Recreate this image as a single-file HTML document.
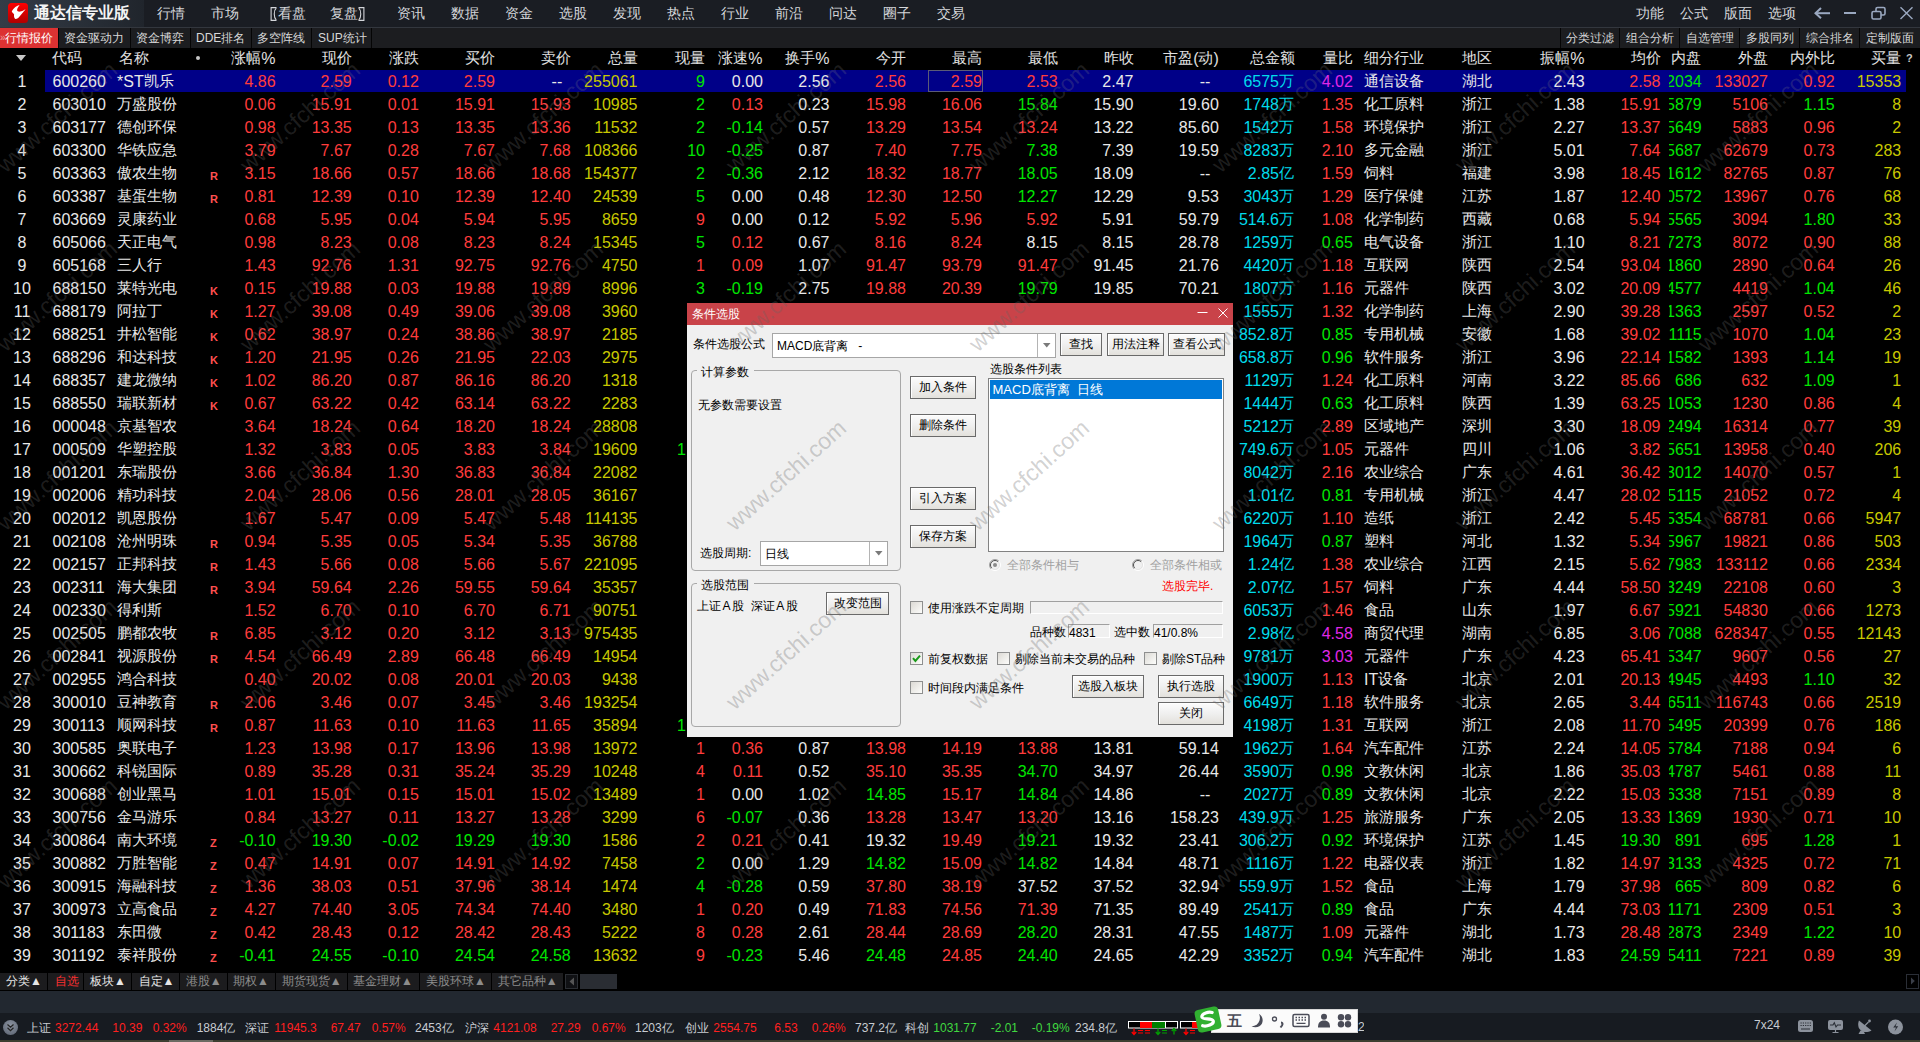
<!DOCTYPE html><html><head><meta charset="utf-8"><style>
*{margin:0;padding:0;box-sizing:border-box}
html,body{width:1920px;height:1042px;overflow:hidden;background:#000;font-family:"Liberation Sans",sans-serif;}
.a{position:absolute}
.c{position:absolute;white-space:nowrap;font-size:15px;line-height:22px;height:22px}
.c.r{text-align:right}
.n{font-size:16px;position:relative;top:1px}
.dt{white-space:nowrap}
.btn{position:absolute;border:1px solid #6a6a6a;background:linear-gradient(#fcfcfc,#f1f1f1 45%,#e3e1dc);box-shadow:inset 1px 1px 0 #fff;text-align:center;font-size:12px;color:#000;white-space:nowrap}
.chk{position:absolute;width:13px;height:13px;border:1px solid #8e8f8f;background:linear-gradient(135deg,#dcdad5,#fdfdfb)}
.wm{position:absolute;width:200px;height:30px;line-height:30px;text-align:center;font-size:23px;color:rgba(128,128,128,0.3);transform:rotate(-42deg);white-space:nowrap}
.st{font-size:12px;line-height:20px;white-space:nowrap}
.mk{position:absolute;font-size:11px;font-weight:bold;color:#ff5050;line-height:12px}
</style></head><body><div class="a" style="left:0;top:0;width:1920px;height:27px;background:#1a1d23"></div>
<div class="a" style="left:0;top:0;width:144px;height:27px;background:linear-gradient(90deg,#343c47,#20252c)"></div>
<div class="a" style="left:0;top:27px;width:1920px;height:1px;background:#33373e"></div>
<div class="a" style="left:0;top:28px;width:1920px;height:20px;background:#1c1d20"></div>
<div class="a" style="left:45px;top:70px;width:1861px;height:22px;background:#000088"></div>
<div class="a" style="left:928px;top:70px;width:55px;height:22px;border:1px solid #5a5a78"></div>
<div class="c" style="left:0;width:44px;text-align:center;top:70px;color:#e8e8e8"><span class="n">1</span></div>
<div class="c " style="left:52.5px;top:70px;color:#e8e8e8"><span class="n">600260</span></div>
<div class="c " style="left:117.0px;top:70px;color:#e8e8e8"><span class="n">*ST</span>凯乐</div>
<div class="c r " style="right:1644.4px;top:70px;color:#ff3c3c"><span class="n">4.86</span></div>
<div class="c r " style="right:1568.3px;top:70px;color:#ff3c3c"><span class="n">2.59</span></div>
<div class="c r " style="right:1501.2px;top:70px;color:#ff3c3c"><span class="n">0.12</span></div>
<div class="c r " style="right:1425.0px;top:70px;color:#ff3c3c"><span class="n">2.59</span></div>
<div class="c r " style="right:1357.8px;top:70px;color:#e8e8e8"><span class="n">--</span></div>
<div class="c r " style="right:1282.5px;top:70px;color:#c8c800"><span class="n">255061</span></div>
<div class="c r " style="right:1215.0px;top:70px;color:#00e600"><span class="n">9</span></div>
<div class="c r " style="right:1157.0px;top:70px;color:#e8e8e8"><span class="n">0.00</span></div>
<div class="c r " style="right:1090.5px;top:70px;color:#e8e8e8"><span class="n">2.56</span></div>
<div class="c r " style="right:1014.0px;top:70px;color:#ff3c3c"><span class="n">2.56</span></div>
<div class="c r " style="right:938.0px;top:70px;color:#ff3c3c"><span class="n">2.59</span></div>
<div class="c r " style="right:862.3px;top:70px;color:#ff3c3c"><span class="n">2.53</span></div>
<div class="c r " style="right:786.5px;top:70px;color:#e8e8e8"><span class="n">2.47</span></div>
<div class="c r " style="right:709.7px;top:70px;color:#e8e8e8"><span class="n">--</span></div>
<div class="c r " style="right:626.0px;top:70px;color:#00dcec"><span class="n">6575</span>万</div>
<div class="c r " style="right:567.2px;top:70px;color:#e028e8"><span class="n">4.02</span></div>
<div class="c " style="left:1364.0px;top:70px;color:#e8e8e8">通信设备</div>
<div class="c " style="left:1462.0px;top:70px;color:#e8e8e8">湖北</div>
<div class="c r " style="right:335.4px;top:70px;color:#e8e8e8"><span class="n">2.43</span></div>
<div class="c r " style="right:259.5px;top:70px;color:#ff3c3c"><span class="n">2.58</span></div>
<div class="a" style="left:1669px;top:70px;width:32.7px;height:22px;overflow:hidden"><div class="c r" style="right:0;top:0;color:#00e600"><span class="n">2034</span></div></div>
<div class="c r " style="right:152.0px;top:70px;color:#ff3c3c"><span class="n">133027</span></div>
<div class="c r " style="right:85.3px;top:70px;color:#ff3c3c"><span class="n">0.92</span></div>
<div class="c r " style="right:18.8px;top:70px;color:#c8c800"><span class="n">15353</span></div>
<div class="c" style="left:0;width:44px;text-align:center;top:93px;color:#e8e8e8"><span class="n">2</span></div>
<div class="c " style="left:52.5px;top:93px;color:#e8e8e8"><span class="n">603010</span></div>
<div class="c " style="left:117.0px;top:93px;color:#e8e8e8">万盛股份</div>
<div class="c r " style="right:1644.4px;top:93px;color:#ff3c3c"><span class="n">0.06</span></div>
<div class="c r " style="right:1568.3px;top:93px;color:#ff3c3c"><span class="n">15.91</span></div>
<div class="c r " style="right:1501.2px;top:93px;color:#ff3c3c"><span class="n">0.01</span></div>
<div class="c r " style="right:1425.0px;top:93px;color:#ff3c3c"><span class="n">15.91</span></div>
<div class="c r " style="right:1349.3px;top:93px;color:#ff3c3c"><span class="n">15.93</span></div>
<div class="c r " style="right:1282.5px;top:93px;color:#c8c800"><span class="n">10985</span></div>
<div class="c r " style="right:1215.0px;top:93px;color:#00e600"><span class="n">2</span></div>
<div class="c r " style="right:1157.0px;top:93px;color:#ff3c3c"><span class="n">0.13</span></div>
<div class="c r " style="right:1090.5px;top:93px;color:#e8e8e8"><span class="n">0.23</span></div>
<div class="c r " style="right:1014.0px;top:93px;color:#ff3c3c"><span class="n">15.98</span></div>
<div class="c r " style="right:938.0px;top:93px;color:#ff3c3c"><span class="n">16.06</span></div>
<div class="c r " style="right:862.3px;top:93px;color:#00e600"><span class="n">15.84</span></div>
<div class="c r " style="right:786.5px;top:93px;color:#e8e8e8"><span class="n">15.90</span></div>
<div class="c r " style="right:701.2px;top:93px;color:#e8e8e8"><span class="n">19.60</span></div>
<div class="c r " style="right:626.0px;top:93px;color:#00dcec"><span class="n">1748</span>万</div>
<div class="c r " style="right:567.2px;top:93px;color:#ff3c3c"><span class="n">1.35</span></div>
<div class="c " style="left:1364.0px;top:93px;color:#e8e8e8">化工原料</div>
<div class="c " style="left:1462.0px;top:93px;color:#e8e8e8">浙江</div>
<div class="c r " style="right:335.4px;top:93px;color:#e8e8e8"><span class="n">1.38</span></div>
<div class="c r " style="right:259.5px;top:93px;color:#ff3c3c"><span class="n">15.91</span></div>
<div class="a" style="left:1669px;top:93px;width:32.7px;height:22px;overflow:hidden"><div class="c r" style="right:0;top:0;color:#00e600"><span class="n">5879</span></div></div>
<div class="c r " style="right:152.0px;top:93px;color:#ff3c3c"><span class="n">5106</span></div>
<div class="c r " style="right:85.3px;top:93px;color:#00e600"><span class="n">1.15</span></div>
<div class="c r " style="right:18.8px;top:93px;color:#c8c800"><span class="n">8</span></div>
<div class="c" style="left:0;width:44px;text-align:center;top:116px;color:#e8e8e8"><span class="n">3</span></div>
<div class="c " style="left:52.5px;top:116px;color:#e8e8e8"><span class="n">603177</span></div>
<div class="c " style="left:117.0px;top:116px;color:#e8e8e8">德创环保</div>
<div class="c r " style="right:1644.4px;top:116px;color:#ff3c3c"><span class="n">0.98</span></div>
<div class="c r " style="right:1568.3px;top:116px;color:#ff3c3c"><span class="n">13.35</span></div>
<div class="c r " style="right:1501.2px;top:116px;color:#ff3c3c"><span class="n">0.13</span></div>
<div class="c r " style="right:1425.0px;top:116px;color:#ff3c3c"><span class="n">13.35</span></div>
<div class="c r " style="right:1349.3px;top:116px;color:#ff3c3c"><span class="n">13.36</span></div>
<div class="c r " style="right:1282.5px;top:116px;color:#c8c800"><span class="n">11532</span></div>
<div class="c r " style="right:1215.0px;top:116px;color:#00e600"><span class="n">2</span></div>
<div class="c r " style="right:1157.0px;top:116px;color:#00e600"><span class="n">-0.14</span></div>
<div class="c r " style="right:1090.5px;top:116px;color:#e8e8e8"><span class="n">0.57</span></div>
<div class="c r " style="right:1014.0px;top:116px;color:#ff3c3c"><span class="n">13.29</span></div>
<div class="c r " style="right:938.0px;top:116px;color:#ff3c3c"><span class="n">13.54</span></div>
<div class="c r " style="right:862.3px;top:116px;color:#ff3c3c"><span class="n">13.24</span></div>
<div class="c r " style="right:786.5px;top:116px;color:#e8e8e8"><span class="n">13.22</span></div>
<div class="c r " style="right:701.2px;top:116px;color:#e8e8e8"><span class="n">85.60</span></div>
<div class="c r " style="right:626.0px;top:116px;color:#00dcec"><span class="n">1542</span>万</div>
<div class="c r " style="right:567.2px;top:116px;color:#ff3c3c"><span class="n">1.58</span></div>
<div class="c " style="left:1364.0px;top:116px;color:#e8e8e8">环境保护</div>
<div class="c " style="left:1462.0px;top:116px;color:#e8e8e8">浙江</div>
<div class="c r " style="right:335.4px;top:116px;color:#e8e8e8"><span class="n">2.27</span></div>
<div class="c r " style="right:259.5px;top:116px;color:#ff3c3c"><span class="n">13.37</span></div>
<div class="a" style="left:1669px;top:116px;width:32.7px;height:22px;overflow:hidden"><div class="c r" style="right:0;top:0;color:#00e600"><span class="n">5649</span></div></div>
<div class="c r " style="right:152.0px;top:116px;color:#ff3c3c"><span class="n">5883</span></div>
<div class="c r " style="right:85.3px;top:116px;color:#ff3c3c"><span class="n">0.96</span></div>
<div class="c r " style="right:18.8px;top:116px;color:#c8c800"><span class="n">2</span></div>
<div class="c" style="left:0;width:44px;text-align:center;top:139px;color:#e8e8e8"><span class="n">4</span></div>
<div class="c " style="left:52.5px;top:139px;color:#e8e8e8"><span class="n">603300</span></div>
<div class="c " style="left:117.0px;top:139px;color:#e8e8e8">华铁应急</div>
<div class="c r " style="right:1644.4px;top:139px;color:#ff3c3c"><span class="n">3.79</span></div>
<div class="c r " style="right:1568.3px;top:139px;color:#ff3c3c"><span class="n">7.67</span></div>
<div class="c r " style="right:1501.2px;top:139px;color:#ff3c3c"><span class="n">0.28</span></div>
<div class="c r " style="right:1425.0px;top:139px;color:#ff3c3c"><span class="n">7.67</span></div>
<div class="c r " style="right:1349.3px;top:139px;color:#ff3c3c"><span class="n">7.68</span></div>
<div class="c r " style="right:1282.5px;top:139px;color:#c8c800"><span class="n">108366</span></div>
<div class="c r " style="right:1215.0px;top:139px;color:#00e600"><span class="n">10</span></div>
<div class="c r " style="right:1157.0px;top:139px;color:#00e600"><span class="n">-0.25</span></div>
<div class="c r " style="right:1090.5px;top:139px;color:#e8e8e8"><span class="n">0.87</span></div>
<div class="c r " style="right:1014.0px;top:139px;color:#ff3c3c"><span class="n">7.40</span></div>
<div class="c r " style="right:938.0px;top:139px;color:#ff3c3c"><span class="n">7.75</span></div>
<div class="c r " style="right:862.3px;top:139px;color:#00e600"><span class="n">7.38</span></div>
<div class="c r " style="right:786.5px;top:139px;color:#e8e8e8"><span class="n">7.39</span></div>
<div class="c r " style="right:701.2px;top:139px;color:#e8e8e8"><span class="n">19.59</span></div>
<div class="c r " style="right:626.0px;top:139px;color:#00dcec"><span class="n">8283</span>万</div>
<div class="c r " style="right:567.2px;top:139px;color:#ff3c3c"><span class="n">2.10</span></div>
<div class="c " style="left:1364.0px;top:139px;color:#e8e8e8">多元金融</div>
<div class="c " style="left:1462.0px;top:139px;color:#e8e8e8">浙江</div>
<div class="c r " style="right:335.4px;top:139px;color:#e8e8e8"><span class="n">5.01</span></div>
<div class="c r " style="right:259.5px;top:139px;color:#ff3c3c"><span class="n">7.64</span></div>
<div class="a" style="left:1669px;top:139px;width:32.7px;height:22px;overflow:hidden"><div class="c r" style="right:0;top:0;color:#00e600"><span class="n">5687</span></div></div>
<div class="c r " style="right:152.0px;top:139px;color:#ff3c3c"><span class="n">62679</span></div>
<div class="c r " style="right:85.3px;top:139px;color:#ff3c3c"><span class="n">0.73</span></div>
<div class="c r " style="right:18.8px;top:139px;color:#c8c800"><span class="n">283</span></div>
<div class="c" style="left:0;width:44px;text-align:center;top:162px;color:#e8e8e8"><span class="n">5</span></div>
<div class="c " style="left:52.5px;top:162px;color:#e8e8e8"><span class="n">603363</span></div>
<div class="c " style="left:117.0px;top:162px;color:#e8e8e8">傲农生物</div>
<div class="mk" style="left:210px;top:170px">R</div>
<div class="c r " style="right:1644.4px;top:162px;color:#ff3c3c"><span class="n">3.15</span></div>
<div class="c r " style="right:1568.3px;top:162px;color:#ff3c3c"><span class="n">18.66</span></div>
<div class="c r " style="right:1501.2px;top:162px;color:#ff3c3c"><span class="n">0.57</span></div>
<div class="c r " style="right:1425.0px;top:162px;color:#ff3c3c"><span class="n">18.66</span></div>
<div class="c r " style="right:1349.3px;top:162px;color:#ff3c3c"><span class="n">18.68</span></div>
<div class="c r " style="right:1282.5px;top:162px;color:#c8c800"><span class="n">154377</span></div>
<div class="c r " style="right:1215.0px;top:162px;color:#00e600"><span class="n">2</span></div>
<div class="c r " style="right:1157.0px;top:162px;color:#00e600"><span class="n">-0.36</span></div>
<div class="c r " style="right:1090.5px;top:162px;color:#e8e8e8"><span class="n">2.12</span></div>
<div class="c r " style="right:1014.0px;top:162px;color:#ff3c3c"><span class="n">18.32</span></div>
<div class="c r " style="right:938.0px;top:162px;color:#ff3c3c"><span class="n">18.77</span></div>
<div class="c r " style="right:862.3px;top:162px;color:#00e600"><span class="n">18.05</span></div>
<div class="c r " style="right:786.5px;top:162px;color:#e8e8e8"><span class="n">18.09</span></div>
<div class="c r " style="right:709.7px;top:162px;color:#e8e8e8"><span class="n">--</span></div>
<div class="c r " style="right:626.0px;top:162px;color:#00dcec"><span class="n">2.85</span>亿</div>
<div class="c r " style="right:567.2px;top:162px;color:#ff3c3c"><span class="n">1.59</span></div>
<div class="c " style="left:1364.0px;top:162px;color:#e8e8e8">饲料</div>
<div class="c " style="left:1462.0px;top:162px;color:#e8e8e8">福建</div>
<div class="c r " style="right:335.4px;top:162px;color:#e8e8e8"><span class="n">3.98</span></div>
<div class="c r " style="right:259.5px;top:162px;color:#ff3c3c"><span class="n">18.45</span></div>
<div class="a" style="left:1669px;top:162px;width:32.7px;height:22px;overflow:hidden"><div class="c r" style="right:0;top:0;color:#00e600"><span class="n">1612</span></div></div>
<div class="c r " style="right:152.0px;top:162px;color:#ff3c3c"><span class="n">82765</span></div>
<div class="c r " style="right:85.3px;top:162px;color:#ff3c3c"><span class="n">0.87</span></div>
<div class="c r " style="right:18.8px;top:162px;color:#c8c800"><span class="n">76</span></div>
<div class="c" style="left:0;width:44px;text-align:center;top:185px;color:#e8e8e8"><span class="n">6</span></div>
<div class="c " style="left:52.5px;top:185px;color:#e8e8e8"><span class="n">603387</span></div>
<div class="c " style="left:117.0px;top:185px;color:#e8e8e8">基蛋生物</div>
<div class="mk" style="left:210px;top:193px">R</div>
<div class="c r " style="right:1644.4px;top:185px;color:#ff3c3c"><span class="n">0.81</span></div>
<div class="c r " style="right:1568.3px;top:185px;color:#ff3c3c"><span class="n">12.39</span></div>
<div class="c r " style="right:1501.2px;top:185px;color:#ff3c3c"><span class="n">0.10</span></div>
<div class="c r " style="right:1425.0px;top:185px;color:#ff3c3c"><span class="n">12.39</span></div>
<div class="c r " style="right:1349.3px;top:185px;color:#ff3c3c"><span class="n">12.40</span></div>
<div class="c r " style="right:1282.5px;top:185px;color:#c8c800"><span class="n">24539</span></div>
<div class="c r " style="right:1215.0px;top:185px;color:#00e600"><span class="n">5</span></div>
<div class="c r " style="right:1157.0px;top:185px;color:#e8e8e8"><span class="n">0.00</span></div>
<div class="c r " style="right:1090.5px;top:185px;color:#e8e8e8"><span class="n">0.48</span></div>
<div class="c r " style="right:1014.0px;top:185px;color:#ff3c3c"><span class="n">12.30</span></div>
<div class="c r " style="right:938.0px;top:185px;color:#ff3c3c"><span class="n">12.50</span></div>
<div class="c r " style="right:862.3px;top:185px;color:#00e600"><span class="n">12.27</span></div>
<div class="c r " style="right:786.5px;top:185px;color:#e8e8e8"><span class="n">12.29</span></div>
<div class="c r " style="right:701.2px;top:185px;color:#e8e8e8"><span class="n">9.53</span></div>
<div class="c r " style="right:626.0px;top:185px;color:#00dcec"><span class="n">3043</span>万</div>
<div class="c r " style="right:567.2px;top:185px;color:#ff3c3c"><span class="n">1.29</span></div>
<div class="c " style="left:1364.0px;top:185px;color:#e8e8e8">医疗保健</div>
<div class="c " style="left:1462.0px;top:185px;color:#e8e8e8">江苏</div>
<div class="c r " style="right:335.4px;top:185px;color:#e8e8e8"><span class="n">1.87</span></div>
<div class="c r " style="right:259.5px;top:185px;color:#ff3c3c"><span class="n">12.40</span></div>
<div class="a" style="left:1669px;top:185px;width:32.7px;height:22px;overflow:hidden"><div class="c r" style="right:0;top:0;color:#00e600"><span class="n">0572</span></div></div>
<div class="c r " style="right:152.0px;top:185px;color:#ff3c3c"><span class="n">13967</span></div>
<div class="c r " style="right:85.3px;top:185px;color:#ff3c3c"><span class="n">0.76</span></div>
<div class="c r " style="right:18.8px;top:185px;color:#c8c800"><span class="n">68</span></div>
<div class="c" style="left:0;width:44px;text-align:center;top:208px;color:#e8e8e8"><span class="n">7</span></div>
<div class="c " style="left:52.5px;top:208px;color:#e8e8e8"><span class="n">603669</span></div>
<div class="c " style="left:117.0px;top:208px;color:#e8e8e8">灵康药业</div>
<div class="c r " style="right:1644.4px;top:208px;color:#ff3c3c"><span class="n">0.68</span></div>
<div class="c r " style="right:1568.3px;top:208px;color:#ff3c3c"><span class="n">5.95</span></div>
<div class="c r " style="right:1501.2px;top:208px;color:#ff3c3c"><span class="n">0.04</span></div>
<div class="c r " style="right:1425.0px;top:208px;color:#ff3c3c"><span class="n">5.94</span></div>
<div class="c r " style="right:1349.3px;top:208px;color:#ff3c3c"><span class="n">5.95</span></div>
<div class="c r " style="right:1282.5px;top:208px;color:#c8c800"><span class="n">8659</span></div>
<div class="c r " style="right:1215.0px;top:208px;color:#ff3c3c"><span class="n">9</span></div>
<div class="c r " style="right:1157.0px;top:208px;color:#e8e8e8"><span class="n">0.00</span></div>
<div class="c r " style="right:1090.5px;top:208px;color:#e8e8e8"><span class="n">0.12</span></div>
<div class="c r " style="right:1014.0px;top:208px;color:#ff3c3c"><span class="n">5.92</span></div>
<div class="c r " style="right:938.0px;top:208px;color:#ff3c3c"><span class="n">5.96</span></div>
<div class="c r " style="right:862.3px;top:208px;color:#ff3c3c"><span class="n">5.92</span></div>
<div class="c r " style="right:786.5px;top:208px;color:#e8e8e8"><span class="n">5.91</span></div>
<div class="c r " style="right:701.2px;top:208px;color:#e8e8e8"><span class="n">59.79</span></div>
<div class="c r " style="right:626.0px;top:208px;color:#00dcec"><span class="n">514.6</span>万</div>
<div class="c r " style="right:567.2px;top:208px;color:#ff3c3c"><span class="n">1.08</span></div>
<div class="c " style="left:1364.0px;top:208px;color:#e8e8e8">化学制药</div>
<div class="c " style="left:1462.0px;top:208px;color:#e8e8e8">西藏</div>
<div class="c r " style="right:335.4px;top:208px;color:#e8e8e8"><span class="n">0.68</span></div>
<div class="c r " style="right:259.5px;top:208px;color:#ff3c3c"><span class="n">5.94</span></div>
<div class="a" style="left:1669px;top:208px;width:32.7px;height:22px;overflow:hidden"><div class="c r" style="right:0;top:0;color:#00e600"><span class="n">5565</span></div></div>
<div class="c r " style="right:152.0px;top:208px;color:#ff3c3c"><span class="n">3094</span></div>
<div class="c r " style="right:85.3px;top:208px;color:#00e600"><span class="n">1.80</span></div>
<div class="c r " style="right:18.8px;top:208px;color:#c8c800"><span class="n">33</span></div>
<div class="c" style="left:0;width:44px;text-align:center;top:231px;color:#e8e8e8"><span class="n">8</span></div>
<div class="c " style="left:52.5px;top:231px;color:#e8e8e8"><span class="n">605066</span></div>
<div class="c " style="left:117.0px;top:231px;color:#e8e8e8">天正电气</div>
<div class="c r " style="right:1644.4px;top:231px;color:#ff3c3c"><span class="n">0.98</span></div>
<div class="c r " style="right:1568.3px;top:231px;color:#ff3c3c"><span class="n">8.23</span></div>
<div class="c r " style="right:1501.2px;top:231px;color:#ff3c3c"><span class="n">0.08</span></div>
<div class="c r " style="right:1425.0px;top:231px;color:#ff3c3c"><span class="n">8.23</span></div>
<div class="c r " style="right:1349.3px;top:231px;color:#ff3c3c"><span class="n">8.24</span></div>
<div class="c r " style="right:1282.5px;top:231px;color:#c8c800"><span class="n">15345</span></div>
<div class="c r " style="right:1215.0px;top:231px;color:#00e600"><span class="n">5</span></div>
<div class="c r " style="right:1157.0px;top:231px;color:#ff3c3c"><span class="n">0.12</span></div>
<div class="c r " style="right:1090.5px;top:231px;color:#e8e8e8"><span class="n">0.67</span></div>
<div class="c r " style="right:1014.0px;top:231px;color:#ff3c3c"><span class="n">8.16</span></div>
<div class="c r " style="right:938.0px;top:231px;color:#ff3c3c"><span class="n">8.24</span></div>
<div class="c r " style="right:862.3px;top:231px;color:#e8e8e8"><span class="n">8.15</span></div>
<div class="c r " style="right:786.5px;top:231px;color:#e8e8e8"><span class="n">8.15</span></div>
<div class="c r " style="right:701.2px;top:231px;color:#e8e8e8"><span class="n">28.78</span></div>
<div class="c r " style="right:626.0px;top:231px;color:#00dcec"><span class="n">1259</span>万</div>
<div class="c r " style="right:567.2px;top:231px;color:#00e600"><span class="n">0.65</span></div>
<div class="c " style="left:1364.0px;top:231px;color:#e8e8e8">电气设备</div>
<div class="c " style="left:1462.0px;top:231px;color:#e8e8e8">浙江</div>
<div class="c r " style="right:335.4px;top:231px;color:#e8e8e8"><span class="n">1.10</span></div>
<div class="c r " style="right:259.5px;top:231px;color:#ff3c3c"><span class="n">8.21</span></div>
<div class="a" style="left:1669px;top:231px;width:32.7px;height:22px;overflow:hidden"><div class="c r" style="right:0;top:0;color:#00e600"><span class="n">7273</span></div></div>
<div class="c r " style="right:152.0px;top:231px;color:#ff3c3c"><span class="n">8072</span></div>
<div class="c r " style="right:85.3px;top:231px;color:#ff3c3c"><span class="n">0.90</span></div>
<div class="c r " style="right:18.8px;top:231px;color:#c8c800"><span class="n">88</span></div>
<div class="c" style="left:0;width:44px;text-align:center;top:254px;color:#e8e8e8"><span class="n">9</span></div>
<div class="c " style="left:52.5px;top:254px;color:#e8e8e8"><span class="n">605168</span></div>
<div class="c " style="left:117.0px;top:254px;color:#e8e8e8">三人行</div>
<div class="c r " style="right:1644.4px;top:254px;color:#ff3c3c"><span class="n">1.43</span></div>
<div class="c r " style="right:1568.3px;top:254px;color:#ff3c3c"><span class="n">92.76</span></div>
<div class="c r " style="right:1501.2px;top:254px;color:#ff3c3c"><span class="n">1.31</span></div>
<div class="c r " style="right:1425.0px;top:254px;color:#ff3c3c"><span class="n">92.75</span></div>
<div class="c r " style="right:1349.3px;top:254px;color:#ff3c3c"><span class="n">92.76</span></div>
<div class="c r " style="right:1282.5px;top:254px;color:#c8c800"><span class="n">4750</span></div>
<div class="c r " style="right:1215.0px;top:254px;color:#ff3c3c"><span class="n">1</span></div>
<div class="c r " style="right:1157.0px;top:254px;color:#ff3c3c"><span class="n">0.09</span></div>
<div class="c r " style="right:1090.5px;top:254px;color:#e8e8e8"><span class="n">1.07</span></div>
<div class="c r " style="right:1014.0px;top:254px;color:#ff3c3c"><span class="n">91.47</span></div>
<div class="c r " style="right:938.0px;top:254px;color:#ff3c3c"><span class="n">93.79</span></div>
<div class="c r " style="right:862.3px;top:254px;color:#ff3c3c"><span class="n">91.47</span></div>
<div class="c r " style="right:786.5px;top:254px;color:#e8e8e8"><span class="n">91.45</span></div>
<div class="c r " style="right:701.2px;top:254px;color:#e8e8e8"><span class="n">21.76</span></div>
<div class="c r " style="right:626.0px;top:254px;color:#00dcec"><span class="n">4420</span>万</div>
<div class="c r " style="right:567.2px;top:254px;color:#ff3c3c"><span class="n">1.18</span></div>
<div class="c " style="left:1364.0px;top:254px;color:#e8e8e8">互联网</div>
<div class="c " style="left:1462.0px;top:254px;color:#e8e8e8">陕西</div>
<div class="c r " style="right:335.4px;top:254px;color:#e8e8e8"><span class="n">2.54</span></div>
<div class="c r " style="right:259.5px;top:254px;color:#ff3c3c"><span class="n">93.04</span></div>
<div class="a" style="left:1669px;top:254px;width:32.7px;height:22px;overflow:hidden"><div class="c r" style="right:0;top:0;color:#00e600"><span class="n">1860</span></div></div>
<div class="c r " style="right:152.0px;top:254px;color:#ff3c3c"><span class="n">2890</span></div>
<div class="c r " style="right:85.3px;top:254px;color:#ff3c3c"><span class="n">0.64</span></div>
<div class="c r " style="right:18.8px;top:254px;color:#c8c800"><span class="n">26</span></div>
<div class="c" style="left:0;width:44px;text-align:center;top:277px;color:#e8e8e8"><span class="n">10</span></div>
<div class="c " style="left:52.5px;top:277px;color:#e8e8e8"><span class="n">688150</span></div>
<div class="c " style="left:117.0px;top:277px;color:#e8e8e8">莱特光电</div>
<div class="mk" style="left:210px;top:285px">K</div>
<div class="c r " style="right:1644.4px;top:277px;color:#ff3c3c"><span class="n">0.15</span></div>
<div class="c r " style="right:1568.3px;top:277px;color:#ff3c3c"><span class="n">19.88</span></div>
<div class="c r " style="right:1501.2px;top:277px;color:#ff3c3c"><span class="n">0.03</span></div>
<div class="c r " style="right:1425.0px;top:277px;color:#ff3c3c"><span class="n">19.88</span></div>
<div class="c r " style="right:1349.3px;top:277px;color:#ff3c3c"><span class="n">19.89</span></div>
<div class="c r " style="right:1282.5px;top:277px;color:#c8c800"><span class="n">8996</span></div>
<div class="c r " style="right:1215.0px;top:277px;color:#00e600"><span class="n">3</span></div>
<div class="c r " style="right:1157.0px;top:277px;color:#00e600"><span class="n">-0.19</span></div>
<div class="c r " style="right:1090.5px;top:277px;color:#e8e8e8"><span class="n">2.75</span></div>
<div class="c r " style="right:1014.0px;top:277px;color:#ff3c3c"><span class="n">19.88</span></div>
<div class="c r " style="right:938.0px;top:277px;color:#ff3c3c"><span class="n">20.39</span></div>
<div class="c r " style="right:862.3px;top:277px;color:#00e600"><span class="n">19.79</span></div>
<div class="c r " style="right:786.5px;top:277px;color:#e8e8e8"><span class="n">19.85</span></div>
<div class="c r " style="right:701.2px;top:277px;color:#e8e8e8"><span class="n">70.21</span></div>
<div class="c r " style="right:626.0px;top:277px;color:#00dcec"><span class="n">1807</span>万</div>
<div class="c r " style="right:567.2px;top:277px;color:#ff3c3c"><span class="n">1.16</span></div>
<div class="c " style="left:1364.0px;top:277px;color:#e8e8e8">元器件</div>
<div class="c " style="left:1462.0px;top:277px;color:#e8e8e8">陕西</div>
<div class="c r " style="right:335.4px;top:277px;color:#e8e8e8"><span class="n">3.02</span></div>
<div class="c r " style="right:259.5px;top:277px;color:#ff3c3c"><span class="n">20.09</span></div>
<div class="a" style="left:1669px;top:277px;width:32.7px;height:22px;overflow:hidden"><div class="c r" style="right:0;top:0;color:#00e600"><span class="n">4577</span></div></div>
<div class="c r " style="right:152.0px;top:277px;color:#ff3c3c"><span class="n">4419</span></div>
<div class="c r " style="right:85.3px;top:277px;color:#00e600"><span class="n">1.04</span></div>
<div class="c r " style="right:18.8px;top:277px;color:#c8c800"><span class="n">46</span></div>
<div class="c" style="left:0;width:44px;text-align:center;top:300px;color:#e8e8e8"><span class="n">11</span></div>
<div class="c " style="left:52.5px;top:300px;color:#e8e8e8"><span class="n">688179</span></div>
<div class="c " style="left:117.0px;top:300px;color:#e8e8e8">阿拉丁</div>
<div class="mk" style="left:210px;top:308px">K</div>
<div class="c r " style="right:1644.4px;top:300px;color:#ff3c3c"><span class="n">1.27</span></div>
<div class="c r " style="right:1568.3px;top:300px;color:#ff3c3c"><span class="n">39.08</span></div>
<div class="c r " style="right:1501.2px;top:300px;color:#ff3c3c"><span class="n">0.49</span></div>
<div class="c r " style="right:1425.0px;top:300px;color:#ff3c3c"><span class="n">39.06</span></div>
<div class="c r " style="right:1349.3px;top:300px;color:#ff3c3c"><span class="n">39.08</span></div>
<div class="c r " style="right:1282.5px;top:300px;color:#c8c800"><span class="n">3960</span></div>
<div class="c r " style="right:626.0px;top:300px;color:#00dcec"><span class="n">1555</span>万</div>
<div class="c r " style="right:567.2px;top:300px;color:#ff3c3c"><span class="n">1.32</span></div>
<div class="c " style="left:1364.0px;top:300px;color:#e8e8e8">化学制药</div>
<div class="c " style="left:1462.0px;top:300px;color:#e8e8e8">上海</div>
<div class="c r " style="right:335.4px;top:300px;color:#e8e8e8"><span class="n">2.90</span></div>
<div class="c r " style="right:259.5px;top:300px;color:#ff3c3c"><span class="n">39.28</span></div>
<div class="a" style="left:1669px;top:300px;width:32.7px;height:22px;overflow:hidden"><div class="c r" style="right:0;top:0;color:#00e600"><span class="n">1363</span></div></div>
<div class="c r " style="right:152.0px;top:300px;color:#ff3c3c"><span class="n">2597</span></div>
<div class="c r " style="right:85.3px;top:300px;color:#ff3c3c"><span class="n">0.52</span></div>
<div class="c r " style="right:18.8px;top:300px;color:#c8c800"><span class="n">2</span></div>
<div class="c" style="left:0;width:44px;text-align:center;top:323px;color:#e8e8e8"><span class="n">12</span></div>
<div class="c " style="left:52.5px;top:323px;color:#e8e8e8"><span class="n">688251</span></div>
<div class="c " style="left:117.0px;top:323px;color:#e8e8e8">井松智能</div>
<div class="mk" style="left:210px;top:331px">K</div>
<div class="c r " style="right:1644.4px;top:323px;color:#ff3c3c"><span class="n">0.62</span></div>
<div class="c r " style="right:1568.3px;top:323px;color:#ff3c3c"><span class="n">38.97</span></div>
<div class="c r " style="right:1501.2px;top:323px;color:#ff3c3c"><span class="n">0.24</span></div>
<div class="c r " style="right:1425.0px;top:323px;color:#ff3c3c"><span class="n">38.86</span></div>
<div class="c r " style="right:1349.3px;top:323px;color:#ff3c3c"><span class="n">38.97</span></div>
<div class="c r " style="right:1282.5px;top:323px;color:#c8c800"><span class="n">2185</span></div>
<div class="c r " style="right:626.0px;top:323px;color:#00dcec"><span class="n">852.8</span>万</div>
<div class="c r " style="right:567.2px;top:323px;color:#00e600"><span class="n">0.85</span></div>
<div class="c " style="left:1364.0px;top:323px;color:#e8e8e8">专用机械</div>
<div class="c " style="left:1462.0px;top:323px;color:#e8e8e8">安徽</div>
<div class="c r " style="right:335.4px;top:323px;color:#e8e8e8"><span class="n">1.68</span></div>
<div class="c r " style="right:259.5px;top:323px;color:#ff3c3c"><span class="n">39.02</span></div>
<div class="a" style="left:1669px;top:323px;width:32.7px;height:22px;overflow:hidden"><div class="c r" style="right:0;top:0;color:#00e600"><span class="n">1115</span></div></div>
<div class="c r " style="right:152.0px;top:323px;color:#ff3c3c"><span class="n">1070</span></div>
<div class="c r " style="right:85.3px;top:323px;color:#00e600"><span class="n">1.04</span></div>
<div class="c r " style="right:18.8px;top:323px;color:#c8c800"><span class="n">23</span></div>
<div class="c" style="left:0;width:44px;text-align:center;top:346px;color:#e8e8e8"><span class="n">13</span></div>
<div class="c " style="left:52.5px;top:346px;color:#e8e8e8"><span class="n">688296</span></div>
<div class="c " style="left:117.0px;top:346px;color:#e8e8e8">和达科技</div>
<div class="mk" style="left:210px;top:354px">K</div>
<div class="c r " style="right:1644.4px;top:346px;color:#ff3c3c"><span class="n">1.20</span></div>
<div class="c r " style="right:1568.3px;top:346px;color:#ff3c3c"><span class="n">21.95</span></div>
<div class="c r " style="right:1501.2px;top:346px;color:#ff3c3c"><span class="n">0.26</span></div>
<div class="c r " style="right:1425.0px;top:346px;color:#ff3c3c"><span class="n">21.95</span></div>
<div class="c r " style="right:1349.3px;top:346px;color:#ff3c3c"><span class="n">22.03</span></div>
<div class="c r " style="right:1282.5px;top:346px;color:#c8c800"><span class="n">2975</span></div>
<div class="c r " style="right:626.0px;top:346px;color:#00dcec"><span class="n">658.8</span>万</div>
<div class="c r " style="right:567.2px;top:346px;color:#00e600"><span class="n">0.96</span></div>
<div class="c " style="left:1364.0px;top:346px;color:#e8e8e8">软件服务</div>
<div class="c " style="left:1462.0px;top:346px;color:#e8e8e8">浙江</div>
<div class="c r " style="right:335.4px;top:346px;color:#e8e8e8"><span class="n">3.96</span></div>
<div class="c r " style="right:259.5px;top:346px;color:#ff3c3c"><span class="n">22.14</span></div>
<div class="a" style="left:1669px;top:346px;width:32.7px;height:22px;overflow:hidden"><div class="c r" style="right:0;top:0;color:#00e600"><span class="n">1582</span></div></div>
<div class="c r " style="right:152.0px;top:346px;color:#ff3c3c"><span class="n">1393</span></div>
<div class="c r " style="right:85.3px;top:346px;color:#00e600"><span class="n">1.14</span></div>
<div class="c r " style="right:18.8px;top:346px;color:#c8c800"><span class="n">19</span></div>
<div class="c" style="left:0;width:44px;text-align:center;top:369px;color:#e8e8e8"><span class="n">14</span></div>
<div class="c " style="left:52.5px;top:369px;color:#e8e8e8"><span class="n">688357</span></div>
<div class="c " style="left:117.0px;top:369px;color:#e8e8e8">建龙微纳</div>
<div class="mk" style="left:210px;top:377px">K</div>
<div class="c r " style="right:1644.4px;top:369px;color:#ff3c3c"><span class="n">1.02</span></div>
<div class="c r " style="right:1568.3px;top:369px;color:#ff3c3c"><span class="n">86.20</span></div>
<div class="c r " style="right:1501.2px;top:369px;color:#ff3c3c"><span class="n">0.87</span></div>
<div class="c r " style="right:1425.0px;top:369px;color:#ff3c3c"><span class="n">86.16</span></div>
<div class="c r " style="right:1349.3px;top:369px;color:#ff3c3c"><span class="n">86.20</span></div>
<div class="c r " style="right:1282.5px;top:369px;color:#c8c800"><span class="n">1318</span></div>
<div class="c r " style="right:626.0px;top:369px;color:#00dcec"><span class="n">1129</span>万</div>
<div class="c r " style="right:567.2px;top:369px;color:#ff3c3c"><span class="n">1.24</span></div>
<div class="c " style="left:1364.0px;top:369px;color:#e8e8e8">化工原料</div>
<div class="c " style="left:1462.0px;top:369px;color:#e8e8e8">河南</div>
<div class="c r " style="right:335.4px;top:369px;color:#e8e8e8"><span class="n">3.22</span></div>
<div class="c r " style="right:259.5px;top:369px;color:#ff3c3c"><span class="n">85.66</span></div>
<div class="a" style="left:1669px;top:369px;width:32.7px;height:22px;overflow:hidden"><div class="c r" style="right:0;top:0;color:#00e600"><span class="n">686</span></div></div>
<div class="c r " style="right:152.0px;top:369px;color:#ff3c3c"><span class="n">632</span></div>
<div class="c r " style="right:85.3px;top:369px;color:#00e600"><span class="n">1.09</span></div>
<div class="c r " style="right:18.8px;top:369px;color:#c8c800"><span class="n">1</span></div>
<div class="c" style="left:0;width:44px;text-align:center;top:392px;color:#e8e8e8"><span class="n">15</span></div>
<div class="c " style="left:52.5px;top:392px;color:#e8e8e8"><span class="n">688550</span></div>
<div class="c " style="left:117.0px;top:392px;color:#e8e8e8">瑞联新材</div>
<div class="mk" style="left:210px;top:400px">K</div>
<div class="c r " style="right:1644.4px;top:392px;color:#ff3c3c"><span class="n">0.67</span></div>
<div class="c r " style="right:1568.3px;top:392px;color:#ff3c3c"><span class="n">63.22</span></div>
<div class="c r " style="right:1501.2px;top:392px;color:#ff3c3c"><span class="n">0.42</span></div>
<div class="c r " style="right:1425.0px;top:392px;color:#ff3c3c"><span class="n">63.14</span></div>
<div class="c r " style="right:1349.3px;top:392px;color:#ff3c3c"><span class="n">63.22</span></div>
<div class="c r " style="right:1282.5px;top:392px;color:#c8c800"><span class="n">2283</span></div>
<div class="c r " style="right:626.0px;top:392px;color:#00dcec"><span class="n">1444</span>万</div>
<div class="c r " style="right:567.2px;top:392px;color:#00e600"><span class="n">0.63</span></div>
<div class="c " style="left:1364.0px;top:392px;color:#e8e8e8">化工原料</div>
<div class="c " style="left:1462.0px;top:392px;color:#e8e8e8">陕西</div>
<div class="c r " style="right:335.4px;top:392px;color:#e8e8e8"><span class="n">1.39</span></div>
<div class="c r " style="right:259.5px;top:392px;color:#ff3c3c"><span class="n">63.25</span></div>
<div class="a" style="left:1669px;top:392px;width:32.7px;height:22px;overflow:hidden"><div class="c r" style="right:0;top:0;color:#00e600"><span class="n">1053</span></div></div>
<div class="c r " style="right:152.0px;top:392px;color:#ff3c3c"><span class="n">1230</span></div>
<div class="c r " style="right:85.3px;top:392px;color:#ff3c3c"><span class="n">0.86</span></div>
<div class="c r " style="right:18.8px;top:392px;color:#c8c800"><span class="n">4</span></div>
<div class="c" style="left:0;width:44px;text-align:center;top:415px;color:#e8e8e8"><span class="n">16</span></div>
<div class="c " style="left:52.5px;top:415px;color:#e8e8e8"><span class="n">000048</span></div>
<div class="c " style="left:117.0px;top:415px;color:#e8e8e8">京基智农</div>
<div class="c r " style="right:1644.4px;top:415px;color:#ff3c3c"><span class="n">3.64</span></div>
<div class="c r " style="right:1568.3px;top:415px;color:#ff3c3c"><span class="n">18.24</span></div>
<div class="c r " style="right:1501.2px;top:415px;color:#ff3c3c"><span class="n">0.64</span></div>
<div class="c r " style="right:1425.0px;top:415px;color:#ff3c3c"><span class="n">18.20</span></div>
<div class="c r " style="right:1349.3px;top:415px;color:#ff3c3c"><span class="n">18.24</span></div>
<div class="c r " style="right:1282.5px;top:415px;color:#c8c800"><span class="n">28808</span></div>
<div class="c r " style="right:626.0px;top:415px;color:#00dcec"><span class="n">5212</span>万</div>
<div class="c r " style="right:567.2px;top:415px;color:#ff3c3c"><span class="n">2.89</span></div>
<div class="c " style="left:1364.0px;top:415px;color:#e8e8e8">区域地产</div>
<div class="c " style="left:1462.0px;top:415px;color:#e8e8e8">深圳</div>
<div class="c r " style="right:335.4px;top:415px;color:#e8e8e8"><span class="n">3.30</span></div>
<div class="c r " style="right:259.5px;top:415px;color:#ff3c3c"><span class="n">18.09</span></div>
<div class="a" style="left:1669px;top:415px;width:32.7px;height:22px;overflow:hidden"><div class="c r" style="right:0;top:0;color:#00e600"><span class="n">2494</span></div></div>
<div class="c r " style="right:152.0px;top:415px;color:#ff3c3c"><span class="n">16314</span></div>
<div class="c r " style="right:85.3px;top:415px;color:#ff3c3c"><span class="n">0.77</span></div>
<div class="c r " style="right:18.8px;top:415px;color:#c8c800"><span class="n">39</span></div>
<div class="c" style="left:0;width:44px;text-align:center;top:438px;color:#e8e8e8"><span class="n">17</span></div>
<div class="c " style="left:52.5px;top:438px;color:#e8e8e8"><span class="n">000509</span></div>
<div class="c " style="left:117.0px;top:438px;color:#e8e8e8">华塑控股</div>
<div class="c r " style="right:1644.4px;top:438px;color:#ff3c3c"><span class="n">1.32</span></div>
<div class="c r " style="right:1568.3px;top:438px;color:#ff3c3c"><span class="n">3.83</span></div>
<div class="c r " style="right:1501.2px;top:438px;color:#ff3c3c"><span class="n">0.05</span></div>
<div class="c r " style="right:1425.0px;top:438px;color:#ff3c3c"><span class="n">3.83</span></div>
<div class="c r " style="right:1349.3px;top:438px;color:#ff3c3c"><span class="n">3.84</span></div>
<div class="c r " style="right:1282.5px;top:438px;color:#c8c800"><span class="n">19609</span></div>
<div class="c " style="left:677.0px;top:438px;color:#00e600"><span class="n">1</span></div>
<div class="c r " style="right:626.0px;top:438px;color:#00dcec"><span class="n">749.6</span>万</div>
<div class="c r " style="right:567.2px;top:438px;color:#ff3c3c"><span class="n">1.05</span></div>
<div class="c " style="left:1364.0px;top:438px;color:#e8e8e8">元器件</div>
<div class="c " style="left:1462.0px;top:438px;color:#e8e8e8">四川</div>
<div class="c r " style="right:335.4px;top:438px;color:#e8e8e8"><span class="n">1.06</span></div>
<div class="c r " style="right:259.5px;top:438px;color:#ff3c3c"><span class="n">3.82</span></div>
<div class="a" style="left:1669px;top:438px;width:32.7px;height:22px;overflow:hidden"><div class="c r" style="right:0;top:0;color:#00e600"><span class="n">5651</span></div></div>
<div class="c r " style="right:152.0px;top:438px;color:#ff3c3c"><span class="n">13958</span></div>
<div class="c r " style="right:85.3px;top:438px;color:#ff3c3c"><span class="n">0.40</span></div>
<div class="c r " style="right:18.8px;top:438px;color:#c8c800"><span class="n">206</span></div>
<div class="c" style="left:0;width:44px;text-align:center;top:461px;color:#e8e8e8"><span class="n">18</span></div>
<div class="c " style="left:52.5px;top:461px;color:#e8e8e8"><span class="n">001201</span></div>
<div class="c " style="left:117.0px;top:461px;color:#e8e8e8">东瑞股份</div>
<div class="c r " style="right:1644.4px;top:461px;color:#ff3c3c"><span class="n">3.66</span></div>
<div class="c r " style="right:1568.3px;top:461px;color:#ff3c3c"><span class="n">36.84</span></div>
<div class="c r " style="right:1501.2px;top:461px;color:#ff3c3c"><span class="n">1.30</span></div>
<div class="c r " style="right:1425.0px;top:461px;color:#ff3c3c"><span class="n">36.83</span></div>
<div class="c r " style="right:1349.3px;top:461px;color:#ff3c3c"><span class="n">36.84</span></div>
<div class="c r " style="right:1282.5px;top:461px;color:#c8c800"><span class="n">22082</span></div>
<div class="c r " style="right:626.0px;top:461px;color:#00dcec"><span class="n">8042</span>万</div>
<div class="c r " style="right:567.2px;top:461px;color:#ff3c3c"><span class="n">2.16</span></div>
<div class="c " style="left:1364.0px;top:461px;color:#e8e8e8">农业综合</div>
<div class="c " style="left:1462.0px;top:461px;color:#e8e8e8">广东</div>
<div class="c r " style="right:335.4px;top:461px;color:#e8e8e8"><span class="n">4.61</span></div>
<div class="c r " style="right:259.5px;top:461px;color:#ff3c3c"><span class="n">36.42</span></div>
<div class="a" style="left:1669px;top:461px;width:32.7px;height:22px;overflow:hidden"><div class="c r" style="right:0;top:0;color:#00e600"><span class="n">3012</span></div></div>
<div class="c r " style="right:152.0px;top:461px;color:#ff3c3c"><span class="n">14070</span></div>
<div class="c r " style="right:85.3px;top:461px;color:#ff3c3c"><span class="n">0.57</span></div>
<div class="c r " style="right:18.8px;top:461px;color:#c8c800"><span class="n">1</span></div>
<div class="c" style="left:0;width:44px;text-align:center;top:484px;color:#e8e8e8"><span class="n">19</span></div>
<div class="c " style="left:52.5px;top:484px;color:#e8e8e8"><span class="n">002006</span></div>
<div class="c " style="left:117.0px;top:484px;color:#e8e8e8">精功科技</div>
<div class="c r " style="right:1644.4px;top:484px;color:#ff3c3c"><span class="n">2.04</span></div>
<div class="c r " style="right:1568.3px;top:484px;color:#ff3c3c"><span class="n">28.06</span></div>
<div class="c r " style="right:1501.2px;top:484px;color:#ff3c3c"><span class="n">0.56</span></div>
<div class="c r " style="right:1425.0px;top:484px;color:#ff3c3c"><span class="n">28.01</span></div>
<div class="c r " style="right:1349.3px;top:484px;color:#ff3c3c"><span class="n">28.05</span></div>
<div class="c r " style="right:1282.5px;top:484px;color:#c8c800"><span class="n">36167</span></div>
<div class="c r " style="right:626.0px;top:484px;color:#00dcec"><span class="n">1.01</span>亿</div>
<div class="c r " style="right:567.2px;top:484px;color:#00e600"><span class="n">0.81</span></div>
<div class="c " style="left:1364.0px;top:484px;color:#e8e8e8">专用机械</div>
<div class="c " style="left:1462.0px;top:484px;color:#e8e8e8">浙江</div>
<div class="c r " style="right:335.4px;top:484px;color:#e8e8e8"><span class="n">4.47</span></div>
<div class="c r " style="right:259.5px;top:484px;color:#ff3c3c"><span class="n">28.02</span></div>
<div class="a" style="left:1669px;top:484px;width:32.7px;height:22px;overflow:hidden"><div class="c r" style="right:0;top:0;color:#00e600"><span class="n">5115</span></div></div>
<div class="c r " style="right:152.0px;top:484px;color:#ff3c3c"><span class="n">21052</span></div>
<div class="c r " style="right:85.3px;top:484px;color:#ff3c3c"><span class="n">0.72</span></div>
<div class="c r " style="right:18.8px;top:484px;color:#c8c800"><span class="n">4</span></div>
<div class="c" style="left:0;width:44px;text-align:center;top:507px;color:#e8e8e8"><span class="n">20</span></div>
<div class="c " style="left:52.5px;top:507px;color:#e8e8e8"><span class="n">002012</span></div>
<div class="c " style="left:117.0px;top:507px;color:#e8e8e8">凯恩股份</div>
<div class="c r " style="right:1644.4px;top:507px;color:#ff3c3c"><span class="n">1.67</span></div>
<div class="c r " style="right:1568.3px;top:507px;color:#ff3c3c"><span class="n">5.47</span></div>
<div class="c r " style="right:1501.2px;top:507px;color:#ff3c3c"><span class="n">0.09</span></div>
<div class="c r " style="right:1425.0px;top:507px;color:#ff3c3c"><span class="n">5.47</span></div>
<div class="c r " style="right:1349.3px;top:507px;color:#ff3c3c"><span class="n">5.48</span></div>
<div class="c r " style="right:1282.5px;top:507px;color:#c8c800"><span class="n">114135</span></div>
<div class="c r " style="right:626.0px;top:507px;color:#00dcec"><span class="n">6220</span>万</div>
<div class="c r " style="right:567.2px;top:507px;color:#ff3c3c"><span class="n">1.10</span></div>
<div class="c " style="left:1364.0px;top:507px;color:#e8e8e8">造纸</div>
<div class="c " style="left:1462.0px;top:507px;color:#e8e8e8">浙江</div>
<div class="c r " style="right:335.4px;top:507px;color:#e8e8e8"><span class="n">2.42</span></div>
<div class="c r " style="right:259.5px;top:507px;color:#ff3c3c"><span class="n">5.45</span></div>
<div class="a" style="left:1669px;top:507px;width:32.7px;height:22px;overflow:hidden"><div class="c r" style="right:0;top:0;color:#00e600"><span class="n">5354</span></div></div>
<div class="c r " style="right:152.0px;top:507px;color:#ff3c3c"><span class="n">68781</span></div>
<div class="c r " style="right:85.3px;top:507px;color:#ff3c3c"><span class="n">0.66</span></div>
<div class="c r " style="right:18.8px;top:507px;color:#c8c800"><span class="n">5947</span></div>
<div class="c" style="left:0;width:44px;text-align:center;top:530px;color:#e8e8e8"><span class="n">21</span></div>
<div class="c " style="left:52.5px;top:530px;color:#e8e8e8"><span class="n">002108</span></div>
<div class="c " style="left:117.0px;top:530px;color:#e8e8e8">沧州明珠</div>
<div class="mk" style="left:210px;top:538px">R</div>
<div class="c r " style="right:1644.4px;top:530px;color:#ff3c3c"><span class="n">0.94</span></div>
<div class="c r " style="right:1568.3px;top:530px;color:#ff3c3c"><span class="n">5.35</span></div>
<div class="c r " style="right:1501.2px;top:530px;color:#ff3c3c"><span class="n">0.05</span></div>
<div class="c r " style="right:1425.0px;top:530px;color:#ff3c3c"><span class="n">5.34</span></div>
<div class="c r " style="right:1349.3px;top:530px;color:#ff3c3c"><span class="n">5.35</span></div>
<div class="c r " style="right:1282.5px;top:530px;color:#c8c800"><span class="n">36788</span></div>
<div class="c r " style="right:626.0px;top:530px;color:#00dcec"><span class="n">1964</span>万</div>
<div class="c r " style="right:567.2px;top:530px;color:#00e600"><span class="n">0.87</span></div>
<div class="c " style="left:1364.0px;top:530px;color:#e8e8e8">塑料</div>
<div class="c " style="left:1462.0px;top:530px;color:#e8e8e8">河北</div>
<div class="c r " style="right:335.4px;top:530px;color:#e8e8e8"><span class="n">1.32</span></div>
<div class="c r " style="right:259.5px;top:530px;color:#ff3c3c"><span class="n">5.34</span></div>
<div class="a" style="left:1669px;top:530px;width:32.7px;height:22px;overflow:hidden"><div class="c r" style="right:0;top:0;color:#00e600"><span class="n">5967</span></div></div>
<div class="c r " style="right:152.0px;top:530px;color:#ff3c3c"><span class="n">19821</span></div>
<div class="c r " style="right:85.3px;top:530px;color:#ff3c3c"><span class="n">0.86</span></div>
<div class="c r " style="right:18.8px;top:530px;color:#c8c800"><span class="n">503</span></div>
<div class="c" style="left:0;width:44px;text-align:center;top:553px;color:#e8e8e8"><span class="n">22</span></div>
<div class="c " style="left:52.5px;top:553px;color:#e8e8e8"><span class="n">002157</span></div>
<div class="c " style="left:117.0px;top:553px;color:#e8e8e8">正邦科技</div>
<div class="mk" style="left:210px;top:561px">R</div>
<div class="c r " style="right:1644.4px;top:553px;color:#ff3c3c"><span class="n">1.43</span></div>
<div class="c r " style="right:1568.3px;top:553px;color:#ff3c3c"><span class="n">5.66</span></div>
<div class="c r " style="right:1501.2px;top:553px;color:#ff3c3c"><span class="n">0.08</span></div>
<div class="c r " style="right:1425.0px;top:553px;color:#ff3c3c"><span class="n">5.66</span></div>
<div class="c r " style="right:1349.3px;top:553px;color:#ff3c3c"><span class="n">5.67</span></div>
<div class="c r " style="right:1282.5px;top:553px;color:#c8c800"><span class="n">221095</span></div>
<div class="c r " style="right:626.0px;top:553px;color:#00dcec"><span class="n">1.24</span>亿</div>
<div class="c r " style="right:567.2px;top:553px;color:#ff3c3c"><span class="n">1.38</span></div>
<div class="c " style="left:1364.0px;top:553px;color:#e8e8e8">农业综合</div>
<div class="c " style="left:1462.0px;top:553px;color:#e8e8e8">江西</div>
<div class="c r " style="right:335.4px;top:553px;color:#e8e8e8"><span class="n">2.15</span></div>
<div class="c r " style="right:259.5px;top:553px;color:#ff3c3c"><span class="n">5.62</span></div>
<div class="a" style="left:1669px;top:553px;width:32.7px;height:22px;overflow:hidden"><div class="c r" style="right:0;top:0;color:#00e600"><span class="n">7983</span></div></div>
<div class="c r " style="right:152.0px;top:553px;color:#ff3c3c"><span class="n">133112</span></div>
<div class="c r " style="right:85.3px;top:553px;color:#ff3c3c"><span class="n">0.66</span></div>
<div class="c r " style="right:18.8px;top:553px;color:#c8c800"><span class="n">2334</span></div>
<div class="c" style="left:0;width:44px;text-align:center;top:576px;color:#e8e8e8"><span class="n">23</span></div>
<div class="c " style="left:52.5px;top:576px;color:#e8e8e8"><span class="n">002311</span></div>
<div class="c " style="left:117.0px;top:576px;color:#e8e8e8">海大集团</div>
<div class="mk" style="left:210px;top:584px">R</div>
<div class="c r " style="right:1644.4px;top:576px;color:#ff3c3c"><span class="n">3.94</span></div>
<div class="c r " style="right:1568.3px;top:576px;color:#ff3c3c"><span class="n">59.64</span></div>
<div class="c r " style="right:1501.2px;top:576px;color:#ff3c3c"><span class="n">2.26</span></div>
<div class="c r " style="right:1425.0px;top:576px;color:#ff3c3c"><span class="n">59.55</span></div>
<div class="c r " style="right:1349.3px;top:576px;color:#ff3c3c"><span class="n">59.64</span></div>
<div class="c r " style="right:1282.5px;top:576px;color:#c8c800"><span class="n">35357</span></div>
<div class="c r " style="right:626.0px;top:576px;color:#00dcec"><span class="n">2.07</span>亿</div>
<div class="c r " style="right:567.2px;top:576px;color:#ff3c3c"><span class="n">1.57</span></div>
<div class="c " style="left:1364.0px;top:576px;color:#e8e8e8">饲料</div>
<div class="c " style="left:1462.0px;top:576px;color:#e8e8e8">广东</div>
<div class="c r " style="right:335.4px;top:576px;color:#e8e8e8"><span class="n">4.44</span></div>
<div class="c r " style="right:259.5px;top:576px;color:#ff3c3c"><span class="n">58.50</span></div>
<div class="a" style="left:1669px;top:576px;width:32.7px;height:22px;overflow:hidden"><div class="c r" style="right:0;top:0;color:#00e600"><span class="n">3249</span></div></div>
<div class="c r " style="right:152.0px;top:576px;color:#ff3c3c"><span class="n">22108</span></div>
<div class="c r " style="right:85.3px;top:576px;color:#ff3c3c"><span class="n">0.60</span></div>
<div class="c r " style="right:18.8px;top:576px;color:#c8c800"><span class="n">3</span></div>
<div class="c" style="left:0;width:44px;text-align:center;top:599px;color:#e8e8e8"><span class="n">24</span></div>
<div class="c " style="left:52.5px;top:599px;color:#e8e8e8"><span class="n">002330</span></div>
<div class="c " style="left:117.0px;top:599px;color:#e8e8e8">得利斯</div>
<div class="c r " style="right:1644.4px;top:599px;color:#ff3c3c"><span class="n">1.52</span></div>
<div class="c r " style="right:1568.3px;top:599px;color:#ff3c3c"><span class="n">6.70</span></div>
<div class="c r " style="right:1501.2px;top:599px;color:#ff3c3c"><span class="n">0.10</span></div>
<div class="c r " style="right:1425.0px;top:599px;color:#ff3c3c"><span class="n">6.70</span></div>
<div class="c r " style="right:1349.3px;top:599px;color:#ff3c3c"><span class="n">6.71</span></div>
<div class="c r " style="right:1282.5px;top:599px;color:#c8c800"><span class="n">90751</span></div>
<div class="c r " style="right:626.0px;top:599px;color:#00dcec"><span class="n">6053</span>万</div>
<div class="c r " style="right:567.2px;top:599px;color:#ff3c3c"><span class="n">1.46</span></div>
<div class="c " style="left:1364.0px;top:599px;color:#e8e8e8">食品</div>
<div class="c " style="left:1462.0px;top:599px;color:#e8e8e8">山东</div>
<div class="c r " style="right:335.4px;top:599px;color:#e8e8e8"><span class="n">1.97</span></div>
<div class="c r " style="right:259.5px;top:599px;color:#ff3c3c"><span class="n">6.67</span></div>
<div class="a" style="left:1669px;top:599px;width:32.7px;height:22px;overflow:hidden"><div class="c r" style="right:0;top:0;color:#00e600"><span class="n">5921</span></div></div>
<div class="c r " style="right:152.0px;top:599px;color:#ff3c3c"><span class="n">54830</span></div>
<div class="c r " style="right:85.3px;top:599px;color:#ff3c3c"><span class="n">0.66</span></div>
<div class="c r " style="right:18.8px;top:599px;color:#c8c800"><span class="n">1273</span></div>
<div class="c" style="left:0;width:44px;text-align:center;top:622px;color:#e8e8e8"><span class="n">25</span></div>
<div class="c " style="left:52.5px;top:622px;color:#e8e8e8"><span class="n">002505</span></div>
<div class="c " style="left:117.0px;top:622px;color:#e8e8e8">鹏都农牧</div>
<div class="mk" style="left:210px;top:630px">R</div>
<div class="c r " style="right:1644.4px;top:622px;color:#ff3c3c"><span class="n">6.85</span></div>
<div class="c r " style="right:1568.3px;top:622px;color:#ff3c3c"><span class="n">3.12</span></div>
<div class="c r " style="right:1501.2px;top:622px;color:#ff3c3c"><span class="n">0.20</span></div>
<div class="c r " style="right:1425.0px;top:622px;color:#ff3c3c"><span class="n">3.12</span></div>
<div class="c r " style="right:1349.3px;top:622px;color:#ff3c3c"><span class="n">3.13</span></div>
<div class="c r " style="right:1282.5px;top:622px;color:#c8c800"><span class="n">975435</span></div>
<div class="c r " style="right:626.0px;top:622px;color:#00dcec"><span class="n">2.98</span>亿</div>
<div class="c r " style="right:567.2px;top:622px;color:#e028e8"><span class="n">4.58</span></div>
<div class="c " style="left:1364.0px;top:622px;color:#e8e8e8">商贸代理</div>
<div class="c " style="left:1462.0px;top:622px;color:#e8e8e8">湖南</div>
<div class="c r " style="right:335.4px;top:622px;color:#e8e8e8"><span class="n">6.85</span></div>
<div class="c r " style="right:259.5px;top:622px;color:#ff3c3c"><span class="n">3.06</span></div>
<div class="a" style="left:1669px;top:622px;width:32.7px;height:22px;overflow:hidden"><div class="c r" style="right:0;top:0;color:#00e600"><span class="n">7088</span></div></div>
<div class="c r " style="right:152.0px;top:622px;color:#ff3c3c"><span class="n">628347</span></div>
<div class="c r " style="right:85.3px;top:622px;color:#ff3c3c"><span class="n">0.55</span></div>
<div class="c r " style="right:18.8px;top:622px;color:#c8c800"><span class="n">12143</span></div>
<div class="c" style="left:0;width:44px;text-align:center;top:645px;color:#e8e8e8"><span class="n">26</span></div>
<div class="c " style="left:52.5px;top:645px;color:#e8e8e8"><span class="n">002841</span></div>
<div class="c " style="left:117.0px;top:645px;color:#e8e8e8">视源股份</div>
<div class="mk" style="left:210px;top:653px">R</div>
<div class="c r " style="right:1644.4px;top:645px;color:#ff3c3c"><span class="n">4.54</span></div>
<div class="c r " style="right:1568.3px;top:645px;color:#ff3c3c"><span class="n">66.49</span></div>
<div class="c r " style="right:1501.2px;top:645px;color:#ff3c3c"><span class="n">2.89</span></div>
<div class="c r " style="right:1425.0px;top:645px;color:#ff3c3c"><span class="n">66.48</span></div>
<div class="c r " style="right:1349.3px;top:645px;color:#ff3c3c"><span class="n">66.49</span></div>
<div class="c r " style="right:1282.5px;top:645px;color:#c8c800"><span class="n">14954</span></div>
<div class="c r " style="right:626.0px;top:645px;color:#00dcec"><span class="n">9781</span>万</div>
<div class="c r " style="right:567.2px;top:645px;color:#e028e8"><span class="n">3.03</span></div>
<div class="c " style="left:1364.0px;top:645px;color:#e8e8e8">元器件</div>
<div class="c " style="left:1462.0px;top:645px;color:#e8e8e8">广东</div>
<div class="c r " style="right:335.4px;top:645px;color:#e8e8e8"><span class="n">4.23</span></div>
<div class="c r " style="right:259.5px;top:645px;color:#ff3c3c"><span class="n">65.41</span></div>
<div class="a" style="left:1669px;top:645px;width:32.7px;height:22px;overflow:hidden"><div class="c r" style="right:0;top:0;color:#00e600"><span class="n">5347</span></div></div>
<div class="c r " style="right:152.0px;top:645px;color:#ff3c3c"><span class="n">9607</span></div>
<div class="c r " style="right:85.3px;top:645px;color:#ff3c3c"><span class="n">0.56</span></div>
<div class="c r " style="right:18.8px;top:645px;color:#c8c800"><span class="n">27</span></div>
<div class="c" style="left:0;width:44px;text-align:center;top:668px;color:#e8e8e8"><span class="n">27</span></div>
<div class="c " style="left:52.5px;top:668px;color:#e8e8e8"><span class="n">002955</span></div>
<div class="c " style="left:117.0px;top:668px;color:#e8e8e8">鸿合科技</div>
<div class="c r " style="right:1644.4px;top:668px;color:#ff3c3c"><span class="n">0.40</span></div>
<div class="c r " style="right:1568.3px;top:668px;color:#ff3c3c"><span class="n">20.02</span></div>
<div class="c r " style="right:1501.2px;top:668px;color:#ff3c3c"><span class="n">0.08</span></div>
<div class="c r " style="right:1425.0px;top:668px;color:#ff3c3c"><span class="n">20.01</span></div>
<div class="c r " style="right:1349.3px;top:668px;color:#ff3c3c"><span class="n">20.03</span></div>
<div class="c r " style="right:1282.5px;top:668px;color:#c8c800"><span class="n">9438</span></div>
<div class="c r " style="right:626.0px;top:668px;color:#00dcec"><span class="n">1900</span>万</div>
<div class="c r " style="right:567.2px;top:668px;color:#ff3c3c"><span class="n">1.13</span></div>
<div class="c " style="left:1364.0px;top:668px;color:#e8e8e8"><span class="n">IT</span>设备</div>
<div class="c " style="left:1462.0px;top:668px;color:#e8e8e8">北京</div>
<div class="c r " style="right:335.4px;top:668px;color:#e8e8e8"><span class="n">2.01</span></div>
<div class="c r " style="right:259.5px;top:668px;color:#ff3c3c"><span class="n">20.13</span></div>
<div class="a" style="left:1669px;top:668px;width:32.7px;height:22px;overflow:hidden"><div class="c r" style="right:0;top:0;color:#00e600"><span class="n">4945</span></div></div>
<div class="c r " style="right:152.0px;top:668px;color:#ff3c3c"><span class="n">4493</span></div>
<div class="c r " style="right:85.3px;top:668px;color:#00e600"><span class="n">1.10</span></div>
<div class="c r " style="right:18.8px;top:668px;color:#c8c800"><span class="n">32</span></div>
<div class="c" style="left:0;width:44px;text-align:center;top:691px;color:#e8e8e8"><span class="n">28</span></div>
<div class="c " style="left:52.5px;top:691px;color:#e8e8e8"><span class="n">300010</span></div>
<div class="c " style="left:117.0px;top:691px;color:#e8e8e8">豆神教育</div>
<div class="mk" style="left:210px;top:699px">R</div>
<div class="c r " style="right:1644.4px;top:691px;color:#ff3c3c"><span class="n">2.06</span></div>
<div class="c r " style="right:1568.3px;top:691px;color:#ff3c3c"><span class="n">3.46</span></div>
<div class="c r " style="right:1501.2px;top:691px;color:#ff3c3c"><span class="n">0.07</span></div>
<div class="c r " style="right:1425.0px;top:691px;color:#ff3c3c"><span class="n">3.45</span></div>
<div class="c r " style="right:1349.3px;top:691px;color:#ff3c3c"><span class="n">3.46</span></div>
<div class="c r " style="right:1282.5px;top:691px;color:#c8c800"><span class="n">193254</span></div>
<div class="c r " style="right:626.0px;top:691px;color:#00dcec"><span class="n">6649</span>万</div>
<div class="c r " style="right:567.2px;top:691px;color:#ff3c3c"><span class="n">1.18</span></div>
<div class="c " style="left:1364.0px;top:691px;color:#e8e8e8">软件服务</div>
<div class="c " style="left:1462.0px;top:691px;color:#e8e8e8">北京</div>
<div class="c r " style="right:335.4px;top:691px;color:#e8e8e8"><span class="n">2.65</span></div>
<div class="c r " style="right:259.5px;top:691px;color:#ff3c3c"><span class="n">3.44</span></div>
<div class="a" style="left:1669px;top:691px;width:32.7px;height:22px;overflow:hidden"><div class="c r" style="right:0;top:0;color:#00e600"><span class="n">6511</span></div></div>
<div class="c r " style="right:152.0px;top:691px;color:#ff3c3c"><span class="n">116743</span></div>
<div class="c r " style="right:85.3px;top:691px;color:#ff3c3c"><span class="n">0.66</span></div>
<div class="c r " style="right:18.8px;top:691px;color:#c8c800"><span class="n">2519</span></div>
<div class="c" style="left:0;width:44px;text-align:center;top:714px;color:#e8e8e8"><span class="n">29</span></div>
<div class="c " style="left:52.5px;top:714px;color:#e8e8e8"><span class="n">300113</span></div>
<div class="c " style="left:117.0px;top:714px;color:#e8e8e8">顺网科技</div>
<div class="mk" style="left:210px;top:722px">R</div>
<div class="c r " style="right:1644.4px;top:714px;color:#ff3c3c"><span class="n">0.87</span></div>
<div class="c r " style="right:1568.3px;top:714px;color:#ff3c3c"><span class="n">11.63</span></div>
<div class="c r " style="right:1501.2px;top:714px;color:#ff3c3c"><span class="n">0.10</span></div>
<div class="c r " style="right:1425.0px;top:714px;color:#ff3c3c"><span class="n">11.63</span></div>
<div class="c r " style="right:1349.3px;top:714px;color:#ff3c3c"><span class="n">11.65</span></div>
<div class="c r " style="right:1282.5px;top:714px;color:#c8c800"><span class="n">35894</span></div>
<div class="c " style="left:677.0px;top:714px;color:#00e600"><span class="n">1</span></div>
<div class="c r " style="right:626.0px;top:714px;color:#00dcec"><span class="n">4198</span>万</div>
<div class="c r " style="right:567.2px;top:714px;color:#ff3c3c"><span class="n">1.31</span></div>
<div class="c " style="left:1364.0px;top:714px;color:#e8e8e8">互联网</div>
<div class="c " style="left:1462.0px;top:714px;color:#e8e8e8">浙江</div>
<div class="c r " style="right:335.4px;top:714px;color:#e8e8e8"><span class="n">2.08</span></div>
<div class="c r " style="right:259.5px;top:714px;color:#ff3c3c"><span class="n">11.70</span></div>
<div class="a" style="left:1669px;top:714px;width:32.7px;height:22px;overflow:hidden"><div class="c r" style="right:0;top:0;color:#00e600"><span class="n">5495</span></div></div>
<div class="c r " style="right:152.0px;top:714px;color:#ff3c3c"><span class="n">20399</span></div>
<div class="c r " style="right:85.3px;top:714px;color:#ff3c3c"><span class="n">0.76</span></div>
<div class="c r " style="right:18.8px;top:714px;color:#c8c800"><span class="n">186</span></div>
<div class="c" style="left:0;width:44px;text-align:center;top:737px;color:#e8e8e8"><span class="n">30</span></div>
<div class="c " style="left:52.5px;top:737px;color:#e8e8e8"><span class="n">300585</span></div>
<div class="c " style="left:117.0px;top:737px;color:#e8e8e8">奥联电子</div>
<div class="c r " style="right:1644.4px;top:737px;color:#ff3c3c"><span class="n">1.23</span></div>
<div class="c r " style="right:1568.3px;top:737px;color:#ff3c3c"><span class="n">13.98</span></div>
<div class="c r " style="right:1501.2px;top:737px;color:#ff3c3c"><span class="n">0.17</span></div>
<div class="c r " style="right:1425.0px;top:737px;color:#ff3c3c"><span class="n">13.96</span></div>
<div class="c r " style="right:1349.3px;top:737px;color:#ff3c3c"><span class="n">13.98</span></div>
<div class="c r " style="right:1282.5px;top:737px;color:#c8c800"><span class="n">13972</span></div>
<div class="c r " style="right:1215.0px;top:737px;color:#ff3c3c"><span class="n">1</span></div>
<div class="c r " style="right:1157.0px;top:737px;color:#ff3c3c"><span class="n">0.36</span></div>
<div class="c r " style="right:1090.5px;top:737px;color:#e8e8e8"><span class="n">0.87</span></div>
<div class="c r " style="right:1014.0px;top:737px;color:#ff3c3c"><span class="n">13.98</span></div>
<div class="c r " style="right:938.0px;top:737px;color:#ff3c3c"><span class="n">14.19</span></div>
<div class="c r " style="right:862.3px;top:737px;color:#ff3c3c"><span class="n">13.88</span></div>
<div class="c r " style="right:786.5px;top:737px;color:#e8e8e8"><span class="n">13.81</span></div>
<div class="c r " style="right:701.2px;top:737px;color:#e8e8e8"><span class="n">59.14</span></div>
<div class="c r " style="right:626.0px;top:737px;color:#00dcec"><span class="n">1962</span>万</div>
<div class="c r " style="right:567.2px;top:737px;color:#ff3c3c"><span class="n">1.64</span></div>
<div class="c " style="left:1364.0px;top:737px;color:#e8e8e8">汽车配件</div>
<div class="c " style="left:1462.0px;top:737px;color:#e8e8e8">江苏</div>
<div class="c r " style="right:335.4px;top:737px;color:#e8e8e8"><span class="n">2.24</span></div>
<div class="c r " style="right:259.5px;top:737px;color:#ff3c3c"><span class="n">14.05</span></div>
<div class="a" style="left:1669px;top:737px;width:32.7px;height:22px;overflow:hidden"><div class="c r" style="right:0;top:0;color:#00e600"><span class="n">5784</span></div></div>
<div class="c r " style="right:152.0px;top:737px;color:#ff3c3c"><span class="n">7188</span></div>
<div class="c r " style="right:85.3px;top:737px;color:#ff3c3c"><span class="n">0.94</span></div>
<div class="c r " style="right:18.8px;top:737px;color:#c8c800"><span class="n">6</span></div>
<div class="c" style="left:0;width:44px;text-align:center;top:760px;color:#e8e8e8"><span class="n">31</span></div>
<div class="c " style="left:52.5px;top:760px;color:#e8e8e8"><span class="n">300662</span></div>
<div class="c " style="left:117.0px;top:760px;color:#e8e8e8">科锐国际</div>
<div class="c r " style="right:1644.4px;top:760px;color:#ff3c3c"><span class="n">0.89</span></div>
<div class="c r " style="right:1568.3px;top:760px;color:#ff3c3c"><span class="n">35.28</span></div>
<div class="c r " style="right:1501.2px;top:760px;color:#ff3c3c"><span class="n">0.31</span></div>
<div class="c r " style="right:1425.0px;top:760px;color:#ff3c3c"><span class="n">35.24</span></div>
<div class="c r " style="right:1349.3px;top:760px;color:#ff3c3c"><span class="n">35.29</span></div>
<div class="c r " style="right:1282.5px;top:760px;color:#c8c800"><span class="n">10248</span></div>
<div class="c r " style="right:1215.0px;top:760px;color:#ff3c3c"><span class="n">4</span></div>
<div class="c r " style="right:1157.0px;top:760px;color:#ff3c3c"><span class="n">0.11</span></div>
<div class="c r " style="right:1090.5px;top:760px;color:#e8e8e8"><span class="n">0.52</span></div>
<div class="c r " style="right:1014.0px;top:760px;color:#ff3c3c"><span class="n">35.10</span></div>
<div class="c r " style="right:938.0px;top:760px;color:#ff3c3c"><span class="n">35.35</span></div>
<div class="c r " style="right:862.3px;top:760px;color:#00e600"><span class="n">34.70</span></div>
<div class="c r " style="right:786.5px;top:760px;color:#e8e8e8"><span class="n">34.97</span></div>
<div class="c r " style="right:701.2px;top:760px;color:#e8e8e8"><span class="n">26.44</span></div>
<div class="c r " style="right:626.0px;top:760px;color:#00dcec"><span class="n">3590</span>万</div>
<div class="c r " style="right:567.2px;top:760px;color:#00e600"><span class="n">0.98</span></div>
<div class="c " style="left:1364.0px;top:760px;color:#e8e8e8">文教休闲</div>
<div class="c " style="left:1462.0px;top:760px;color:#e8e8e8">北京</div>
<div class="c r " style="right:335.4px;top:760px;color:#e8e8e8"><span class="n">1.86</span></div>
<div class="c r " style="right:259.5px;top:760px;color:#ff3c3c"><span class="n">35.03</span></div>
<div class="a" style="left:1669px;top:760px;width:32.7px;height:22px;overflow:hidden"><div class="c r" style="right:0;top:0;color:#00e600"><span class="n">4787</span></div></div>
<div class="c r " style="right:152.0px;top:760px;color:#ff3c3c"><span class="n">5461</span></div>
<div class="c r " style="right:85.3px;top:760px;color:#ff3c3c"><span class="n">0.88</span></div>
<div class="c r " style="right:18.8px;top:760px;color:#c8c800"><span class="n">11</span></div>
<div class="c" style="left:0;width:44px;text-align:center;top:783px;color:#e8e8e8"><span class="n">32</span></div>
<div class="c " style="left:52.5px;top:783px;color:#e8e8e8"><span class="n">300688</span></div>
<div class="c " style="left:117.0px;top:783px;color:#e8e8e8">创业黑马</div>
<div class="c r " style="right:1644.4px;top:783px;color:#ff3c3c"><span class="n">1.01</span></div>
<div class="c r " style="right:1568.3px;top:783px;color:#ff3c3c"><span class="n">15.01</span></div>
<div class="c r " style="right:1501.2px;top:783px;color:#ff3c3c"><span class="n">0.15</span></div>
<div class="c r " style="right:1425.0px;top:783px;color:#ff3c3c"><span class="n">15.01</span></div>
<div class="c r " style="right:1349.3px;top:783px;color:#ff3c3c"><span class="n">15.02</span></div>
<div class="c r " style="right:1282.5px;top:783px;color:#c8c800"><span class="n">13489</span></div>
<div class="c r " style="right:1215.0px;top:783px;color:#ff3c3c"><span class="n">1</span></div>
<div class="c r " style="right:1157.0px;top:783px;color:#e8e8e8"><span class="n">0.00</span></div>
<div class="c r " style="right:1090.5px;top:783px;color:#e8e8e8"><span class="n">1.02</span></div>
<div class="c r " style="right:1014.0px;top:783px;color:#00e600"><span class="n">14.85</span></div>
<div class="c r " style="right:938.0px;top:783px;color:#ff3c3c"><span class="n">15.17</span></div>
<div class="c r " style="right:862.3px;top:783px;color:#00e600"><span class="n">14.84</span></div>
<div class="c r " style="right:786.5px;top:783px;color:#e8e8e8"><span class="n">14.86</span></div>
<div class="c r " style="right:709.7px;top:783px;color:#e8e8e8"><span class="n">--</span></div>
<div class="c r " style="right:626.0px;top:783px;color:#00dcec"><span class="n">2027</span>万</div>
<div class="c r " style="right:567.2px;top:783px;color:#00e600"><span class="n">0.89</span></div>
<div class="c " style="left:1364.0px;top:783px;color:#e8e8e8">文教休闲</div>
<div class="c " style="left:1462.0px;top:783px;color:#e8e8e8">北京</div>
<div class="c r " style="right:335.4px;top:783px;color:#e8e8e8"><span class="n">2.22</span></div>
<div class="c r " style="right:259.5px;top:783px;color:#ff3c3c"><span class="n">15.03</span></div>
<div class="a" style="left:1669px;top:783px;width:32.7px;height:22px;overflow:hidden"><div class="c r" style="right:0;top:0;color:#00e600"><span class="n">6338</span></div></div>
<div class="c r " style="right:152.0px;top:783px;color:#ff3c3c"><span class="n">7151</span></div>
<div class="c r " style="right:85.3px;top:783px;color:#ff3c3c"><span class="n">0.89</span></div>
<div class="c r " style="right:18.8px;top:783px;color:#c8c800"><span class="n">8</span></div>
<div class="c" style="left:0;width:44px;text-align:center;top:806px;color:#e8e8e8"><span class="n">33</span></div>
<div class="c " style="left:52.5px;top:806px;color:#e8e8e8"><span class="n">300756</span></div>
<div class="c " style="left:117.0px;top:806px;color:#e8e8e8">金马游乐</div>
<div class="c r " style="right:1644.4px;top:806px;color:#ff3c3c"><span class="n">0.84</span></div>
<div class="c r " style="right:1568.3px;top:806px;color:#ff3c3c"><span class="n">13.27</span></div>
<div class="c r " style="right:1501.2px;top:806px;color:#ff3c3c"><span class="n">0.11</span></div>
<div class="c r " style="right:1425.0px;top:806px;color:#ff3c3c"><span class="n">13.27</span></div>
<div class="c r " style="right:1349.3px;top:806px;color:#ff3c3c"><span class="n">13.28</span></div>
<div class="c r " style="right:1282.5px;top:806px;color:#c8c800"><span class="n">3299</span></div>
<div class="c r " style="right:1215.0px;top:806px;color:#ff3c3c"><span class="n">6</span></div>
<div class="c r " style="right:1157.0px;top:806px;color:#00e600"><span class="n">-0.07</span></div>
<div class="c r " style="right:1090.5px;top:806px;color:#e8e8e8"><span class="n">0.36</span></div>
<div class="c r " style="right:1014.0px;top:806px;color:#ff3c3c"><span class="n">13.28</span></div>
<div class="c r " style="right:938.0px;top:806px;color:#ff3c3c"><span class="n">13.47</span></div>
<div class="c r " style="right:862.3px;top:806px;color:#ff3c3c"><span class="n">13.20</span></div>
<div class="c r " style="right:786.5px;top:806px;color:#e8e8e8"><span class="n">13.16</span></div>
<div class="c r " style="right:701.2px;top:806px;color:#e8e8e8"><span class="n">158.23</span></div>
<div class="c r " style="right:626.0px;top:806px;color:#00dcec"><span class="n">439.9</span>万</div>
<div class="c r " style="right:567.2px;top:806px;color:#ff3c3c"><span class="n">1.25</span></div>
<div class="c " style="left:1364.0px;top:806px;color:#e8e8e8">旅游服务</div>
<div class="c " style="left:1462.0px;top:806px;color:#e8e8e8">广东</div>
<div class="c r " style="right:335.4px;top:806px;color:#e8e8e8"><span class="n">2.05</span></div>
<div class="c r " style="right:259.5px;top:806px;color:#ff3c3c"><span class="n">13.33</span></div>
<div class="a" style="left:1669px;top:806px;width:32.7px;height:22px;overflow:hidden"><div class="c r" style="right:0;top:0;color:#00e600"><span class="n">1369</span></div></div>
<div class="c r " style="right:152.0px;top:806px;color:#ff3c3c"><span class="n">1930</span></div>
<div class="c r " style="right:85.3px;top:806px;color:#ff3c3c"><span class="n">0.71</span></div>
<div class="c r " style="right:18.8px;top:806px;color:#c8c800"><span class="n">10</span></div>
<div class="c" style="left:0;width:44px;text-align:center;top:829px;color:#e8e8e8"><span class="n">34</span></div>
<div class="c " style="left:52.5px;top:829px;color:#e8e8e8"><span class="n">300864</span></div>
<div class="c " style="left:117.0px;top:829px;color:#e8e8e8">南大环境</div>
<div class="mk" style="left:210px;top:837px">Z</div>
<div class="c r " style="right:1644.4px;top:829px;color:#00e600"><span class="n">-0.10</span></div>
<div class="c r " style="right:1568.3px;top:829px;color:#00e600"><span class="n">19.30</span></div>
<div class="c r " style="right:1501.2px;top:829px;color:#00e600"><span class="n">-0.02</span></div>
<div class="c r " style="right:1425.0px;top:829px;color:#00e600"><span class="n">19.29</span></div>
<div class="c r " style="right:1349.3px;top:829px;color:#00e600"><span class="n">19.30</span></div>
<div class="c r " style="right:1282.5px;top:829px;color:#c8c800"><span class="n">1586</span></div>
<div class="c r " style="right:1215.0px;top:829px;color:#ff3c3c"><span class="n">2</span></div>
<div class="c r " style="right:1157.0px;top:829px;color:#ff3c3c"><span class="n">0.21</span></div>
<div class="c r " style="right:1090.5px;top:829px;color:#e8e8e8"><span class="n">0.41</span></div>
<div class="c r " style="right:1014.0px;top:829px;color:#e8e8e8"><span class="n">19.32</span></div>
<div class="c r " style="right:938.0px;top:829px;color:#ff3c3c"><span class="n">19.49</span></div>
<div class="c r " style="right:862.3px;top:829px;color:#00e600"><span class="n">19.21</span></div>
<div class="c r " style="right:786.5px;top:829px;color:#e8e8e8"><span class="n">19.32</span></div>
<div class="c r " style="right:701.2px;top:829px;color:#e8e8e8"><span class="n">23.41</span></div>
<div class="c r " style="right:626.0px;top:829px;color:#00dcec"><span class="n">306.2</span>万</div>
<div class="c r " style="right:567.2px;top:829px;color:#00e600"><span class="n">0.92</span></div>
<div class="c " style="left:1364.0px;top:829px;color:#e8e8e8">环境保护</div>
<div class="c " style="left:1462.0px;top:829px;color:#e8e8e8">江苏</div>
<div class="c r " style="right:335.4px;top:829px;color:#e8e8e8"><span class="n">1.45</span></div>
<div class="c r " style="right:259.5px;top:829px;color:#00e600"><span class="n">19.30</span></div>
<div class="a" style="left:1669px;top:829px;width:32.7px;height:22px;overflow:hidden"><div class="c r" style="right:0;top:0;color:#00e600"><span class="n">891</span></div></div>
<div class="c r " style="right:152.0px;top:829px;color:#ff3c3c"><span class="n">695</span></div>
<div class="c r " style="right:85.3px;top:829px;color:#00e600"><span class="n">1.28</span></div>
<div class="c r " style="right:18.8px;top:829px;color:#c8c800"><span class="n">1</span></div>
<div class="c" style="left:0;width:44px;text-align:center;top:852px;color:#e8e8e8"><span class="n">35</span></div>
<div class="c " style="left:52.5px;top:852px;color:#e8e8e8"><span class="n">300882</span></div>
<div class="c " style="left:117.0px;top:852px;color:#e8e8e8">万胜智能</div>
<div class="mk" style="left:210px;top:860px">Z</div>
<div class="c r " style="right:1644.4px;top:852px;color:#ff3c3c"><span class="n">0.47</span></div>
<div class="c r " style="right:1568.3px;top:852px;color:#ff3c3c"><span class="n">14.91</span></div>
<div class="c r " style="right:1501.2px;top:852px;color:#ff3c3c"><span class="n">0.07</span></div>
<div class="c r " style="right:1425.0px;top:852px;color:#ff3c3c"><span class="n">14.91</span></div>
<div class="c r " style="right:1349.3px;top:852px;color:#ff3c3c"><span class="n">14.92</span></div>
<div class="c r " style="right:1282.5px;top:852px;color:#c8c800"><span class="n">7458</span></div>
<div class="c r " style="right:1215.0px;top:852px;color:#00e600"><span class="n">2</span></div>
<div class="c r " style="right:1157.0px;top:852px;color:#e8e8e8"><span class="n">0.00</span></div>
<div class="c r " style="right:1090.5px;top:852px;color:#e8e8e8"><span class="n">1.29</span></div>
<div class="c r " style="right:1014.0px;top:852px;color:#00e600"><span class="n">14.82</span></div>
<div class="c r " style="right:938.0px;top:852px;color:#ff3c3c"><span class="n">15.09</span></div>
<div class="c r " style="right:862.3px;top:852px;color:#00e600"><span class="n">14.82</span></div>
<div class="c r " style="right:786.5px;top:852px;color:#e8e8e8"><span class="n">14.84</span></div>
<div class="c r " style="right:701.2px;top:852px;color:#e8e8e8"><span class="n">48.71</span></div>
<div class="c r " style="right:626.0px;top:852px;color:#00dcec"><span class="n">1116</span>万</div>
<div class="c r " style="right:567.2px;top:852px;color:#ff3c3c"><span class="n">1.22</span></div>
<div class="c " style="left:1364.0px;top:852px;color:#e8e8e8">电器仪表</div>
<div class="c " style="left:1462.0px;top:852px;color:#e8e8e8">浙江</div>
<div class="c r " style="right:335.4px;top:852px;color:#e8e8e8"><span class="n">1.82</span></div>
<div class="c r " style="right:259.5px;top:852px;color:#ff3c3c"><span class="n">14.97</span></div>
<div class="a" style="left:1669px;top:852px;width:32.7px;height:22px;overflow:hidden"><div class="c r" style="right:0;top:0;color:#00e600"><span class="n">3133</span></div></div>
<div class="c r " style="right:152.0px;top:852px;color:#ff3c3c"><span class="n">4325</span></div>
<div class="c r " style="right:85.3px;top:852px;color:#ff3c3c"><span class="n">0.72</span></div>
<div class="c r " style="right:18.8px;top:852px;color:#c8c800"><span class="n">71</span></div>
<div class="c" style="left:0;width:44px;text-align:center;top:875px;color:#e8e8e8"><span class="n">36</span></div>
<div class="c " style="left:52.5px;top:875px;color:#e8e8e8"><span class="n">300915</span></div>
<div class="c " style="left:117.0px;top:875px;color:#e8e8e8">海融科技</div>
<div class="mk" style="left:210px;top:883px">Z</div>
<div class="c r " style="right:1644.4px;top:875px;color:#ff3c3c"><span class="n">1.36</span></div>
<div class="c r " style="right:1568.3px;top:875px;color:#ff3c3c"><span class="n">38.03</span></div>
<div class="c r " style="right:1501.2px;top:875px;color:#ff3c3c"><span class="n">0.51</span></div>
<div class="c r " style="right:1425.0px;top:875px;color:#ff3c3c"><span class="n">37.96</span></div>
<div class="c r " style="right:1349.3px;top:875px;color:#ff3c3c"><span class="n">38.14</span></div>
<div class="c r " style="right:1282.5px;top:875px;color:#c8c800"><span class="n">1474</span></div>
<div class="c r " style="right:1215.0px;top:875px;color:#00e600"><span class="n">4</span></div>
<div class="c r " style="right:1157.0px;top:875px;color:#00e600"><span class="n">-0.28</span></div>
<div class="c r " style="right:1090.5px;top:875px;color:#e8e8e8"><span class="n">0.59</span></div>
<div class="c r " style="right:1014.0px;top:875px;color:#ff3c3c"><span class="n">37.80</span></div>
<div class="c r " style="right:938.0px;top:875px;color:#ff3c3c"><span class="n">38.19</span></div>
<div class="c r " style="right:862.3px;top:875px;color:#e8e8e8"><span class="n">37.52</span></div>
<div class="c r " style="right:786.5px;top:875px;color:#e8e8e8"><span class="n">37.52</span></div>
<div class="c r " style="right:701.2px;top:875px;color:#e8e8e8"><span class="n">32.94</span></div>
<div class="c r " style="right:626.0px;top:875px;color:#00dcec"><span class="n">559.9</span>万</div>
<div class="c r " style="right:567.2px;top:875px;color:#ff3c3c"><span class="n">1.52</span></div>
<div class="c " style="left:1364.0px;top:875px;color:#e8e8e8">食品</div>
<div class="c " style="left:1462.0px;top:875px;color:#e8e8e8">上海</div>
<div class="c r " style="right:335.4px;top:875px;color:#e8e8e8"><span class="n">1.79</span></div>
<div class="c r " style="right:259.5px;top:875px;color:#ff3c3c"><span class="n">37.98</span></div>
<div class="a" style="left:1669px;top:875px;width:32.7px;height:22px;overflow:hidden"><div class="c r" style="right:0;top:0;color:#00e600"><span class="n">665</span></div></div>
<div class="c r " style="right:152.0px;top:875px;color:#ff3c3c"><span class="n">809</span></div>
<div class="c r " style="right:85.3px;top:875px;color:#ff3c3c"><span class="n">0.82</span></div>
<div class="c r " style="right:18.8px;top:875px;color:#c8c800"><span class="n">6</span></div>
<div class="c" style="left:0;width:44px;text-align:center;top:898px;color:#e8e8e8"><span class="n">37</span></div>
<div class="c " style="left:52.5px;top:898px;color:#e8e8e8"><span class="n">300973</span></div>
<div class="c " style="left:117.0px;top:898px;color:#e8e8e8">立高食品</div>
<div class="mk" style="left:210px;top:906px">Z</div>
<div class="c r " style="right:1644.4px;top:898px;color:#ff3c3c"><span class="n">4.27</span></div>
<div class="c r " style="right:1568.3px;top:898px;color:#ff3c3c"><span class="n">74.40</span></div>
<div class="c r " style="right:1501.2px;top:898px;color:#ff3c3c"><span class="n">3.05</span></div>
<div class="c r " style="right:1425.0px;top:898px;color:#ff3c3c"><span class="n">74.34</span></div>
<div class="c r " style="right:1349.3px;top:898px;color:#ff3c3c"><span class="n">74.40</span></div>
<div class="c r " style="right:1282.5px;top:898px;color:#c8c800"><span class="n">3480</span></div>
<div class="c r " style="right:1215.0px;top:898px;color:#ff3c3c"><span class="n">1</span></div>
<div class="c r " style="right:1157.0px;top:898px;color:#ff3c3c"><span class="n">0.20</span></div>
<div class="c r " style="right:1090.5px;top:898px;color:#e8e8e8"><span class="n">0.49</span></div>
<div class="c r " style="right:1014.0px;top:898px;color:#ff3c3c"><span class="n">71.83</span></div>
<div class="c r " style="right:938.0px;top:898px;color:#ff3c3c"><span class="n">74.56</span></div>
<div class="c r " style="right:862.3px;top:898px;color:#ff3c3c"><span class="n">71.39</span></div>
<div class="c r " style="right:786.5px;top:898px;color:#e8e8e8"><span class="n">71.35</span></div>
<div class="c r " style="right:701.2px;top:898px;color:#e8e8e8"><span class="n">89.49</span></div>
<div class="c r " style="right:626.0px;top:898px;color:#00dcec"><span class="n">2541</span>万</div>
<div class="c r " style="right:567.2px;top:898px;color:#00e600"><span class="n">0.89</span></div>
<div class="c " style="left:1364.0px;top:898px;color:#e8e8e8">食品</div>
<div class="c " style="left:1462.0px;top:898px;color:#e8e8e8">广东</div>
<div class="c r " style="right:335.4px;top:898px;color:#e8e8e8"><span class="n">4.44</span></div>
<div class="c r " style="right:259.5px;top:898px;color:#ff3c3c"><span class="n">73.03</span></div>
<div class="a" style="left:1669px;top:898px;width:32.7px;height:22px;overflow:hidden"><div class="c r" style="right:0;top:0;color:#00e600"><span class="n">1171</span></div></div>
<div class="c r " style="right:152.0px;top:898px;color:#ff3c3c"><span class="n">2309</span></div>
<div class="c r " style="right:85.3px;top:898px;color:#ff3c3c"><span class="n">0.51</span></div>
<div class="c r " style="right:18.8px;top:898px;color:#c8c800"><span class="n">3</span></div>
<div class="c" style="left:0;width:44px;text-align:center;top:921px;color:#e8e8e8"><span class="n">38</span></div>
<div class="c " style="left:52.5px;top:921px;color:#e8e8e8"><span class="n">301183</span></div>
<div class="c " style="left:117.0px;top:921px;color:#e8e8e8">东田微</div>
<div class="mk" style="left:210px;top:929px">Z</div>
<div class="c r " style="right:1644.4px;top:921px;color:#ff3c3c"><span class="n">0.42</span></div>
<div class="c r " style="right:1568.3px;top:921px;color:#ff3c3c"><span class="n">28.43</span></div>
<div class="c r " style="right:1501.2px;top:921px;color:#ff3c3c"><span class="n">0.12</span></div>
<div class="c r " style="right:1425.0px;top:921px;color:#ff3c3c"><span class="n">28.42</span></div>
<div class="c r " style="right:1349.3px;top:921px;color:#ff3c3c"><span class="n">28.43</span></div>
<div class="c r " style="right:1282.5px;top:921px;color:#c8c800"><span class="n">5222</span></div>
<div class="c r " style="right:1215.0px;top:921px;color:#ff3c3c"><span class="n">8</span></div>
<div class="c r " style="right:1157.0px;top:921px;color:#ff3c3c"><span class="n">0.28</span></div>
<div class="c r " style="right:1090.5px;top:921px;color:#e8e8e8"><span class="n">2.61</span></div>
<div class="c r " style="right:1014.0px;top:921px;color:#ff3c3c"><span class="n">28.44</span></div>
<div class="c r " style="right:938.0px;top:921px;color:#ff3c3c"><span class="n">28.69</span></div>
<div class="c r " style="right:862.3px;top:921px;color:#00e600"><span class="n">28.20</span></div>
<div class="c r " style="right:786.5px;top:921px;color:#e8e8e8"><span class="n">28.31</span></div>
<div class="c r " style="right:701.2px;top:921px;color:#e8e8e8"><span class="n">47.55</span></div>
<div class="c r " style="right:626.0px;top:921px;color:#00dcec"><span class="n">1487</span>万</div>
<div class="c r " style="right:567.2px;top:921px;color:#ff3c3c"><span class="n">1.09</span></div>
<div class="c " style="left:1364.0px;top:921px;color:#e8e8e8">元器件</div>
<div class="c " style="left:1462.0px;top:921px;color:#e8e8e8">湖北</div>
<div class="c r " style="right:335.4px;top:921px;color:#e8e8e8"><span class="n">1.73</span></div>
<div class="c r " style="right:259.5px;top:921px;color:#ff3c3c"><span class="n">28.48</span></div>
<div class="a" style="left:1669px;top:921px;width:32.7px;height:22px;overflow:hidden"><div class="c r" style="right:0;top:0;color:#00e600"><span class="n">2873</span></div></div>
<div class="c r " style="right:152.0px;top:921px;color:#ff3c3c"><span class="n">2349</span></div>
<div class="c r " style="right:85.3px;top:921px;color:#00e600"><span class="n">1.22</span></div>
<div class="c r " style="right:18.8px;top:921px;color:#c8c800"><span class="n">10</span></div>
<div class="c" style="left:0;width:44px;text-align:center;top:944px;color:#e8e8e8"><span class="n">39</span></div>
<div class="c " style="left:52.5px;top:944px;color:#e8e8e8"><span class="n">301192</span></div>
<div class="c " style="left:117.0px;top:944px;color:#e8e8e8">泰祥股份</div>
<div class="mk" style="left:210px;top:952px">Z</div>
<div class="c r " style="right:1644.4px;top:944px;color:#00e600"><span class="n">-0.41</span></div>
<div class="c r " style="right:1568.3px;top:944px;color:#00e600"><span class="n">24.55</span></div>
<div class="c r " style="right:1501.2px;top:944px;color:#00e600"><span class="n">-0.10</span></div>
<div class="c r " style="right:1425.0px;top:944px;color:#00e600"><span class="n">24.54</span></div>
<div class="c r " style="right:1349.3px;top:944px;color:#00e600"><span class="n">24.58</span></div>
<div class="c r " style="right:1282.5px;top:944px;color:#c8c800"><span class="n">13632</span></div>
<div class="c r " style="right:1215.0px;top:944px;color:#ff3c3c"><span class="n">9</span></div>
<div class="c r " style="right:1157.0px;top:944px;color:#00e600"><span class="n">-0.23</span></div>
<div class="c r " style="right:1090.5px;top:944px;color:#e8e8e8"><span class="n">5.46</span></div>
<div class="c r " style="right:1014.0px;top:944px;color:#00e600"><span class="n">24.48</span></div>
<div class="c r " style="right:938.0px;top:944px;color:#ff3c3c"><span class="n">24.85</span></div>
<div class="c r " style="right:862.3px;top:944px;color:#00e600"><span class="n">24.40</span></div>
<div class="c r " style="right:786.5px;top:944px;color:#e8e8e8"><span class="n">24.65</span></div>
<div class="c r " style="right:701.2px;top:944px;color:#e8e8e8"><span class="n">42.29</span></div>
<div class="c r " style="right:626.0px;top:944px;color:#00dcec"><span class="n">3352</span>万</div>
<div class="c r " style="right:567.2px;top:944px;color:#00e600"><span class="n">0.94</span></div>
<div class="c " style="left:1364.0px;top:944px;color:#e8e8e8">汽车配件</div>
<div class="c " style="left:1462.0px;top:944px;color:#e8e8e8">湖北</div>
<div class="c r " style="right:335.4px;top:944px;color:#e8e8e8"><span class="n">1.83</span></div>
<div class="c r " style="right:259.5px;top:944px;color:#00e600"><span class="n">24.59</span></div>
<div class="a" style="left:1669px;top:944px;width:32.7px;height:22px;overflow:hidden"><div class="c r" style="right:0;top:0;color:#00e600"><span class="n">5411</span></div></div>
<div class="c r " style="right:152.0px;top:944px;color:#ff3c3c"><span class="n">7221</span></div>
<div class="c r " style="right:85.3px;top:944px;color:#ff3c3c"><span class="n">0.89</span></div>
<div class="c r " style="right:18.8px;top:944px;color:#c8c800"><span class="n">39</span></div>
<div class="c h" style="left:52.3px;top:47px;color:#e0e0e0">代码</div>
<div class="c h" style="left:118.8px;top:47px;color:#e0e0e0">名称</div>
<div class="c r h" style="right:1644.5px;top:47px;color:#e0e0e0">涨幅<span class="n">%</span></div>
<div class="c r h" style="right:1568.0px;top:47px;color:#e0e0e0">现价</div>
<div class="c r h" style="right:1501.2px;top:47px;color:#e0e0e0">涨跌</div>
<div class="c r h" style="right:1425.0px;top:47px;color:#e0e0e0">买价</div>
<div class="c r h" style="right:1349.0px;top:47px;color:#e0e0e0">卖价</div>
<div class="c r h" style="right:1282.0px;top:47px;color:#e0e0e0">总量</div>
<div class="c r h" style="right:1215.0px;top:47px;color:#e0e0e0">现量</div>
<div class="c r h" style="right:1157.5px;top:47px;color:#e0e0e0">涨速<span class="n">%</span></div>
<div class="c r h" style="right:1090.5px;top:47px;color:#e0e0e0">换手<span class="n">%</span></div>
<div class="c r h" style="right:1014.0px;top:47px;color:#e0e0e0">今开</div>
<div class="c r h" style="right:938.0px;top:47px;color:#e0e0e0">最高</div>
<div class="c r h" style="right:862.0px;top:47px;color:#e0e0e0">最低</div>
<div class="c r h" style="right:786.2px;top:47px;color:#e0e0e0">昨收</div>
<div class="c r h" style="right:701.2px;top:47px;color:#e0e0e0">市盈<span class="n">(</span>动<span class="n">)</span></div>
<div class="c r h" style="right:625.0px;top:47px;color:#e0e0e0">总金额</div>
<div class="c r h" style="right:567.0px;top:47px;color:#e0e0e0">量比</div>
<div class="c h" style="left:1363.8px;top:47px;color:#e0e0e0">细分行业</div>
<div class="c h" style="left:1462.0px;top:47px;color:#e0e0e0">地区</div>
<div class="c r h" style="right:335.5px;top:47px;color:#e0e0e0">振幅<span class="n">%</span></div>
<div class="c r h" style="right:259.2px;top:47px;color:#e0e0e0">均价</div>
<div class="c r h" style="right:219.2px;top:47px;color:#e0e0e0">内盘</div>
<div class="c r h" style="right:152.5px;top:47px;color:#e0e0e0">外盘</div>
<div class="c r h" style="right:85.5px;top:47px;color:#e0e0e0">内外比</div>
<div class="c r h" style="right:19.0px;top:47px;color:#e0e0e0">买量</div>
<svg class="a" style="left:16px;top:55px" width="10" height="6"><path d="M0 0H10L5 6Z" fill="#c8c8c8"/></svg>
<div class="a" style="left:196px;top:56px;width:4px;height:4px;border-radius:2px;background:#c8c8c8"></div>
<div class="a" style="left:1906px;top:52px;font-size:11px;color:#c8c8c8;font-weight:bold">?</div>
<svg class="a" style="left:8px;top:3px" width="20" height="20" viewBox="0 0 20 20">
<defs><linearGradient id="lg" x1="0" y1="0" x2="0" y2="1"><stop offset="0" stop-color="#ff0000"/><stop offset="1" stop-color="#b00000"/></linearGradient></defs>
<rect x="0" y="0" width="20" height="20" rx="3.5" fill="url(#lg)"/>
<path d="M11.6 2.1 C9 2.8 5.5 5 3.8 8.2 C3.9 9.6 5.8 10.5 6.1 11.4 C5.8 13 6 15.2 7.5 15.9 C8.5 16.1 9.8 15.6 10.7 14.6 L17.6 6.3 C16.5 6.9 13.5 8.6 12.1 8.6 C10.5 8.8 9.1 8.2 9.1 7.3 C9 5.8 10.2 4.2 11.6 2.1Z" fill="#fff"/>
</svg>
<div class="a" style="left:34px;top:1px;font-size:16px;line-height:24px;font-weight:bold;color:#f4f4f4;white-space:nowrap">通达信专业版</div>
<svg class="a" style="left:270px;top:7px" width="8" height="15" fill="none" stroke="#d4d6da" stroke-width="1.1"><path d="M6.5 0.6H1.1V13.4H6.5"/><path d="M6.2 1.2C3.6 3.5 3.6 10.5 6.2 12.8"/></svg>
<svg class="a" style="left:358px;top:7px" width="8" height="15" fill="none" stroke="#d4d6da" stroke-width="1.1"><path d="M0.5 0.6H5.9V13.4H0.5"/><path d="M0.8 1.2C3.4 3.5 3.4 10.5 0.8 12.8"/></svg>
<div class="a" style="left:157.0px;top:2px;font-size:14px;line-height:22px;color:#d4d6da;white-space:nowrap">行情</div>
<div class="a" style="left:211.0px;top:2px;font-size:14px;line-height:22px;color:#d4d6da;white-space:nowrap">市场</div>
<div class="a" style="left:278.0px;top:2px;font-size:14px;line-height:22px;color:#d4d6da;white-space:nowrap">看盘</div>
<div class="a" style="left:330.0px;top:2px;font-size:14px;line-height:22px;color:#d4d6da;white-space:nowrap">复盘</div>
<div class="a" style="left:397.0px;top:2px;font-size:14px;line-height:22px;color:#d4d6da;white-space:nowrap">资讯</div>
<div class="a" style="left:450.8px;top:2px;font-size:14px;line-height:22px;color:#d4d6da;white-space:nowrap">数据</div>
<div class="a" style="left:505.0px;top:2px;font-size:14px;line-height:22px;color:#d4d6da;white-space:nowrap">资金</div>
<div class="a" style="left:558.8px;top:2px;font-size:14px;line-height:22px;color:#d4d6da;white-space:nowrap">选股</div>
<div class="a" style="left:613.0px;top:2px;font-size:14px;line-height:22px;color:#d4d6da;white-space:nowrap">发现</div>
<div class="a" style="left:667.0px;top:2px;font-size:14px;line-height:22px;color:#d4d6da;white-space:nowrap">热点</div>
<div class="a" style="left:720.8px;top:2px;font-size:14px;line-height:22px;color:#d4d6da;white-space:nowrap">行业</div>
<div class="a" style="left:775.0px;top:2px;font-size:14px;line-height:22px;color:#d4d6da;white-space:nowrap">前沿</div>
<div class="a" style="left:829.0px;top:2px;font-size:14px;line-height:22px;color:#d4d6da;white-space:nowrap">问达</div>
<div class="a" style="left:883.0px;top:2px;font-size:14px;line-height:22px;color:#d4d6da;white-space:nowrap">圈子</div>
<div class="a" style="left:937.0px;top:2px;font-size:14px;line-height:22px;color:#d4d6da;white-space:nowrap">交易</div>
<div class="a" style="left:1636.0px;top:2px;font-size:14px;line-height:22px;color:#d4d6da;white-space:nowrap">功能</div>
<div class="a" style="left:1680.0px;top:2px;font-size:14px;line-height:22px;color:#d4d6da;white-space:nowrap">公式</div>
<div class="a" style="left:1724.0px;top:2px;font-size:14px;line-height:22px;color:#d4d6da;white-space:nowrap">版面</div>
<div class="a" style="left:1768.0px;top:2px;font-size:14px;line-height:22px;color:#d4d6da;white-space:nowrap">选项</div>
<svg class="a" style="left:1812px;top:4px" width="104" height="18" viewBox="0 0 104 18" fill="none" stroke="#9aa8c0">
<path d="M3.5 9.2H18" stroke-width="2"/><path d="M9 4L3.5 9.2L9 14.2" stroke-width="2"/>
<path d="M32 9H44" stroke-width="2"/>
<rect x="64" y="3.5" width="9" height="7.5" rx="1.5" stroke-width="1.6"/>
<rect x="60" y="7.5" width="9" height="7.5" rx="1.5" fill="#1a1d24" stroke-width="1.6"/>
<path d="M88.5 3.2L100.5 15M100.5 3.2L88.5 15" stroke-width="1.4"/>
</svg>
<div class="a" style="left:0;top:28px;width:58px;height:20px;background:#dc3232"></div>
<div class="a" style="left:0;top:30px;font-size:10px;line-height:16px;color:#f0a0a0">»</div>
<div class="a" style="left:5px;top:28px;font-size:12px;line-height:20px;color:#fff;white-space:nowrap">行情报价</div>
<div class="a" style="left:64.0px;top:28px;font-size:12px;line-height:20px;color:#d8d8d8;white-space:nowrap">资金驱动力</div>
<div class="a" style="left:136.0px;top:28px;font-size:12px;line-height:20px;color:#d8d8d8;white-space:nowrap">资金博弈</div>
<div class="a" style="left:196.0px;top:28px;font-size:12px;line-height:20px;color:#d8d8d8;white-space:nowrap">DDE排名</div>
<div class="a" style="left:257.0px;top:28px;font-size:12px;line-height:20px;color:#d8d8d8;white-space:nowrap">多空阵线</div>
<div class="a" style="left:318.0px;top:28px;font-size:12px;line-height:20px;color:#d8d8d8;white-space:nowrap">SUP统计</div>
<div class="a" style="left:1566.0px;top:28px;font-size:12px;line-height:20px;color:#d8d8d8;white-space:nowrap">分类过滤</div>
<div class="a" style="left:1626.0px;top:28px;font-size:12px;line-height:20px;color:#d8d8d8;white-space:nowrap">组合分析</div>
<div class="a" style="left:1686.0px;top:28px;font-size:12px;line-height:20px;color:#d8d8d8;white-space:nowrap">自选管理</div>
<div class="a" style="left:1746.0px;top:28px;font-size:12px;line-height:20px;color:#d8d8d8;white-space:nowrap">多股同列</div>
<div class="a" style="left:1805.5px;top:28px;font-size:12px;line-height:20px;color:#d8d8d8;white-space:nowrap">综合排名</div>
<div class="a" style="left:1865.5px;top:28px;font-size:12px;line-height:20px;color:#d8d8d8;white-space:nowrap">定制版面</div>
<div class="a" style="left:58px;top:28px;width:1px;height:20px;background:#050505"></div>
<div class="a" style="left:130px;top:28px;width:1px;height:20px;background:#050505"></div>
<div class="a" style="left:190px;top:28px;width:1px;height:20px;background:#050505"></div>
<div class="a" style="left:251px;top:28px;width:1px;height:20px;background:#050505"></div>
<div class="a" style="left:311px;top:28px;width:1px;height:20px;background:#050505"></div>
<div class="a" style="left:371px;top:28px;width:1px;height:20px;background:#050505"></div>
<div class="a" style="left:1560px;top:28px;width:1px;height:20px;background:#050505"></div>
<div class="a" style="left:1619px;top:28px;width:1px;height:20px;background:#050505"></div>
<div class="a" style="left:1679px;top:28px;width:1px;height:20px;background:#050505"></div>
<div class="a" style="left:1739px;top:28px;width:1px;height:20px;background:#050505"></div>
<div class="a" style="left:1799px;top:28px;width:1px;height:20px;background:#050505"></div>
<div class="a" style="left:1859px;top:28px;width:1px;height:20px;background:#050505"></div>
<div class="a" style="left:0;top:973px;width:1920px;height:18px;background:#000"></div>
<div class="a" style="left:0;top:973px;width:564px;height:17px;background:#1c1c1e"></div>
<div class="a" style="left:6.0px;top:972px;font-size:12px;line-height:19px;color:#e6e6e6;white-space:nowrap">分类▲</div>
<div class="a" style="left:55.0px;top:972px;font-size:12px;line-height:19px;color:#ff3030;white-space:nowrap">自选</div>
<div class="a" style="left:90.0px;top:972px;font-size:12px;line-height:19px;color:#e6e6e6;white-space:nowrap">板块▲</div>
<div class="a" style="left:138.5px;top:972px;font-size:12px;line-height:19px;color:#e6e6e6;white-space:nowrap">自定▲</div>
<div class="a" style="left:185.7px;top:972px;font-size:12px;line-height:19px;color:#8c8c8c;white-space:nowrap">港股▲</div>
<div class="a" style="left:233.0px;top:972px;font-size:12px;line-height:19px;color:#8c8c8c;white-space:nowrap">期权▲</div>
<div class="a" style="left:281.7px;top:972px;font-size:12px;line-height:19px;color:#8c8c8c;white-space:nowrap">期货现货▲</div>
<div class="a" style="left:353.0px;top:972px;font-size:12px;line-height:19px;color:#8c8c8c;white-space:nowrap">基金理财▲</div>
<div class="a" style="left:426.0px;top:972px;font-size:12px;line-height:19px;color:#8c8c8c;white-space:nowrap">美股环球▲</div>
<div class="a" style="left:497.7px;top:972px;font-size:12px;line-height:19px;color:#8c8c8c;white-space:nowrap">其它品种▲</div>
<div class="a" style="left:47px;top:973px;width:1px;height:17px;background:#000"></div>
<div class="a" style="left:83px;top:973px;width:1px;height:17px;background:#000"></div>
<div class="a" style="left:131px;top:973px;width:1px;height:17px;background:#000"></div>
<div class="a" style="left:179px;top:973px;width:1px;height:17px;background:#000"></div>
<div class="a" style="left:227px;top:973px;width:1px;height:17px;background:#000"></div>
<div class="a" style="left:275px;top:973px;width:1px;height:17px;background:#000"></div>
<div class="a" style="left:347px;top:973px;width:1px;height:17px;background:#000"></div>
<div class="a" style="left:419px;top:973px;width:1px;height:17px;background:#000"></div>
<div class="a" style="left:491px;top:973px;width:1px;height:17px;background:#000"></div>
<div class="a" style="left:563px;top:973px;width:1px;height:17px;background:#000"></div>
<div class="a" style="left:565px;top:974px;width:13px;height:15px;border:1px solid #2c2f34;background:#101114"></div>
<svg class="a" style="left:568px;top:977px" width="8" height="9"><path d="M6 0.5V8.5L1.5 4.5Z" fill="#555"/></svg>
<div class="a" style="left:580px;top:974px;width:37px;height:15px;background:#2a2d33"></div>
<div class="a" style="left:1906px;top:974px;width:13px;height:15px;border:1px solid #2a2e36"></div>
<svg class="a" style="left:1910px;top:977px" width="7" height="9"><path d="M1 0.5V7.5L4.8 4Z" fill="#3a3e48"/></svg>
<div class="a" style="left:0;top:991px;width:1920px;height:22px;background:#222830"></div>
<div class="a" style="left:0;top:1013px;width:1920px;height:27px;background:#171b21"></div>
<div class="a" style="left:0;top:1040px;width:1920px;height:2px;background:#3c3e30"></div>
<div class="a" style="left:169px;top:1040px;width:44px;height:2px;background:#6a6a62"></div>
<div class="a" style="left:3px;top:1020px;width:15px;height:15px;border-radius:50%;background:radial-gradient(circle at 50% 35%,#8a92a0,#5a6270)"></div>
<svg class="a" style="left:6px;top:1023px" width="9" height="9" fill="none" stroke="#222" stroke-width="1.2"><path d="M1.5 1.5L4.5 4.3L7.5 1.5M1.5 4.8L4.5 7.6L7.5 4.8"/></svg>
<div class="a st" style="left:26.7px;top:1018px;color:#c8ccd2">上证</div>
<div class="a st" style="left:55.0px;top:1018px;color:#ff2020">3272.44</div>
<div class="a st" style="left:112.3px;top:1018px;color:#ff2020">10.39</div>
<div class="a st" style="left:152.7px;top:1018px;color:#ff2020">0.32%</div>
<div class="a st" style="left:196.7px;top:1018px;color:#c8ccd2">1884亿</div>
<div class="a st" style="left:245.0px;top:1018px;color:#c8ccd2">深证</div>
<div class="a st" style="left:274.3px;top:1018px;color:#ff2020">11945.3</div>
<div class="a st" style="left:330.7px;top:1018px;color:#ff2020">67.47</div>
<div class="a st" style="left:371.7px;top:1018px;color:#ff2020">0.57%</div>
<div class="a st" style="left:415.0px;top:1018px;color:#c8ccd2">2453亿</div>
<div class="a st" style="left:465.0px;top:1018px;color:#c8ccd2">沪深</div>
<div class="a st" style="left:493.3px;top:1018px;color:#ff2020">4121.08</div>
<div class="a st" style="left:550.7px;top:1018px;color:#ff2020">27.29</div>
<div class="a st" style="left:591.7px;top:1018px;color:#ff2020">0.67%</div>
<div class="a st" style="left:635.0px;top:1018px;color:#c8ccd2">1203亿</div>
<div class="a st" style="left:685.0px;top:1018px;color:#c8ccd2">创业</div>
<div class="a st" style="left:713.3px;top:1018px;color:#ff2020">2554.75</div>
<div class="a st" style="left:774.3px;top:1018px;color:#ff2020">6.53</div>
<div class="a st" style="left:811.7px;top:1018px;color:#ff2020">0.26%</div>
<div class="a st" style="left:855.0px;top:1018px;color:#c8ccd2">737.2亿</div>
<div class="a st" style="left:905.0px;top:1018px;color:#c8ccd2">科创</div>
<div class="a st" style="left:933.3px;top:1018px;color:#40d840">1031.77</div>
<div class="a st" style="left:990.7px;top:1018px;color:#40d840">-2.01</div>
<div class="a st" style="left:1031.7px;top:1018px;color:#40d840">-0.19%</div>
<div class="a st" style="left:1075.0px;top:1018px;color:#c8ccd2">234.8亿</div>
<div class="a st" style="left:1754.0px;top:1015px;color:#c8ccd2">7x24</div>
<svg class="a" style="left:1127px;top:1020px" width="100" height="16">
<rect x="1.5" y="1.5" width="49" height="6.5" fill="#000" stroke="#fff" stroke-width="1"/>
<rect x="13" y="2" width="12" height="6" fill="#ff0000"/><rect x="25" y="2" width="13" height="6" fill="#008000"/>
<path d="M38.5 1.5V8" stroke="#fff"/>
<path d="M7 8.5V14.5M4.8 12L7 14.5L9.2 12" stroke="#ff0000" stroke-width="1.3" fill="none"/>
<path d="M11 10.5H16M11 13H16M18 10.5H23M18 13H23" stroke="#ff0000" stroke-width="1.2"/>
<path d="M31 8.5V14.5M28.8 12L31 14.5L33.2 12" stroke="#00a000" stroke-width="1.3" fill="none"/>
<path d="M35 10.5H40M35 13H40" stroke="#00a000" stroke-width="1.2"/>
<path d="M47 8.5V14.5M44.8 11L47 8.5L49.2 11" stroke="#00a000" stroke-width="1.3" fill="none"/>
<rect x="53.5" y="1.5" width="49" height="6.5" fill="#000" stroke="#fff" stroke-width="1"/>
<rect x="65" y="2" width="12" height="6" fill="#ff0000"/>
<path d="M59 8.5V14.5M56.8 12L59 14.5L61.2 12" stroke="#ff0000" stroke-width="1.3" fill="none"/>
<path d="M63 10.5H68M63 13H68" stroke="#ff0000" stroke-width="1.2"/>
</svg>
<div class="a" style="left:1211px;top:1009px;width:147px;height:24px;background:#fbfbfb;border:1px solid #d8d8d8"></div>
<svg class="a" style="left:1193px;top:1005px" width="30" height="29" viewBox="0 0 30 29">
<g transform="rotate(-12 15 14.5)"><rect x="3" y="3" width="24" height="23" rx="4" fill="#30b030"/>
<path d="M20.5 8.5C17.5 6.8 10 7 9.5 10.8C9 14 19.5 13.5 19.8 17C20 20.5 12 21.5 8.5 19.5" fill="none" stroke="#fff" stroke-width="3.2" stroke-linecap="round"/></g></svg>
<div class="a" style="left:1227px;top:1011px;font-size:15px;line-height:20px;color:#4a4c58;font-weight:bold">五</div>
<svg class="a" style="left:1250px;top:1013px" width="104" height="16" fill="#4a4c58">
<path d="M9 1C12.5 3 13.5 7 12 10.5C10.5 13.8 6 15 1.5 13.5C5.5 13 8.5 11 9.5 7.5C10.2 5 10 3 9 1Z"/>
<circle cx="24.5" cy="6" r="2" fill="none" stroke="#4a4c58" stroke-width="1.3"/>
<path d="M31 9.5C32.5 9.5 33 11 32 12.5L30.5 14.5" fill="none" stroke="#4a4c58" stroke-width="2"/>
<rect x="43" y="1.5" width="16" height="12" rx="1.5" fill="none" stroke="#4a4c58" stroke-width="1.5"/>
<path d="M45.5 4.5h1.5M48.5 4.5h1.5M51.5 4.5h1.5M54.5 4.5h1.5M45.5 7h1.5M48.5 7h1.5M51.5 7h1.5M54.5 7h1.5M46.5 10.3h9" stroke="#4a4c58" stroke-width="1.3"/>
<circle cx="74" cy="3.8" r="3"/><path d="M68 14.5C68 9.5 70 7.5 74 7.5C78 7.5 80 9.5 80 14.5Z"/>
<circle cx="91" cy="4.2" r="3.2"/><circle cx="98" cy="4.2" r="3.2"/><circle cx="91" cy="11.2" r="3.2"/><circle cx="98" cy="11.2" r="3.2"/>
</svg>
<div class="a st" style="left:1358px;top:1017px;color:#c8ccd2;width:6px;overflow:hidden">2</div>
<svg class="a" style="left:1797px;top:1018px" width="108" height="17">
<rect x="1" y="2" width="15" height="12" rx="2.5" fill="#8c929c"/>
<path d="M3.5 5h1.2M5.8 5h1.2M8.1 5h1.2M10.4 5h1.2M12.7 5h1.2M3.5 7.5h1.2M5.8 7.5h1.2M8.1 7.5h1.2M10.4 7.5h1.2M12.7 7.5h1.2M4 11h9" stroke="#2a2e36" stroke-width="1.1"/>
<rect x="31" y="2" width="15" height="10" rx="2" fill="#8c929c"/>
<path d="M33 7H36L37.3 4.8L39 9L40.5 7H44" fill="none" stroke="#2a2e36" stroke-width="1.1"/>
<path d="M35.5 14.5H41.5M38.5 12V14.5" stroke="#8c929c" stroke-width="1.2"/>
<path d="M62 2.5C60.5 6 61 10 64 12.5C66.5 14.5 70.5 14.8 74.5 12.5Z" fill="#8c929c"/>
<path d="M67.5 8L71.5 4" stroke="#8c929c" stroke-width="1.2"/><circle cx="72.5" cy="3" r="1.4" fill="#8c929c"/>
<path d="M63.5 12.5L61.5 16H68L66.5 13" fill="#8c929c"/>
<circle cx="98.5" cy="9" r="7.5" fill="#8c929c"/>
<path d="M100 4.5L96.2 9.5H99L97.5 13.5L101.2 8.3H98.5Z" fill="#2a2e36"/>
</svg>
<div class="a" style="left:0;top:48px;width:1920px;height:902px;overflow:hidden">
<div class="wm" style="left:-286.3px;top:-125.2px;color:rgba(128,128,128,0.24)">www.cfchi.com</div>
<div class="wm" style="left:-286.3px;top:53.8px;color:rgba(128,128,128,0.24)">www.cfchi.com</div>
<div class="wm" style="left:-286.3px;top:232.8px;color:rgba(128,128,128,0.24)">www.cfchi.com</div>
<div class="wm" style="left:-286.3px;top:411.8px;color:rgba(128,128,128,0.24)">www.cfchi.com</div>
<div class="wm" style="left:-286.3px;top:590.8px;color:rgba(128,128,128,0.24)">www.cfchi.com</div>
<div class="wm" style="left:-286.3px;top:769.8px;color:rgba(128,128,128,0.24)">www.cfchi.com</div>
<div class="wm" style="left:-286.3px;top:948.8px;color:rgba(128,128,128,0.24)">www.cfchi.com</div>
<div class="wm" style="left:-286.3px;top:1127.8px;color:rgba(128,128,128,0.24)">www.cfchi.com</div>
<div class="wm" style="left:-43.3px;top:-125.2px;color:rgba(128,128,128,0.24)">www.cfchi.com</div>
<div class="wm" style="left:-43.3px;top:53.8px;color:rgba(128,128,128,0.24)">www.cfchi.com</div>
<div class="wm" style="left:-43.3px;top:232.8px;color:rgba(128,128,128,0.24)">www.cfchi.com</div>
<div class="wm" style="left:-43.3px;top:411.8px;color:rgba(128,128,128,0.24)">www.cfchi.com</div>
<div class="wm" style="left:-43.3px;top:590.8px;color:rgba(128,128,128,0.24)">www.cfchi.com</div>
<div class="wm" style="left:-43.3px;top:769.8px;color:rgba(128,128,128,0.24)">www.cfchi.com</div>
<div class="wm" style="left:-43.3px;top:948.8px;color:rgba(128,128,128,0.24)">www.cfchi.com</div>
<div class="wm" style="left:-43.3px;top:1127.8px;color:rgba(128,128,128,0.24)">www.cfchi.com</div>
<div class="wm" style="left:199.7px;top:-125.2px;color:rgba(128,128,128,0.24)">www.cfchi.com</div>
<div class="wm" style="left:199.7px;top:53.8px;color:rgba(128,128,128,0.24)">www.cfchi.com</div>
<div class="wm" style="left:199.7px;top:232.8px;color:rgba(128,128,128,0.24)">www.cfchi.com</div>
<div class="wm" style="left:199.7px;top:411.8px;color:rgba(128,128,128,0.24)">www.cfchi.com</div>
<div class="wm" style="left:199.7px;top:590.8px;color:rgba(128,128,128,0.24)">www.cfchi.com</div>
<div class="wm" style="left:199.7px;top:769.8px;color:rgba(128,128,128,0.24)">www.cfchi.com</div>
<div class="wm" style="left:199.7px;top:948.8px;color:rgba(128,128,128,0.24)">www.cfchi.com</div>
<div class="wm" style="left:199.7px;top:1127.8px;color:rgba(128,128,128,0.24)">www.cfchi.com</div>
<div class="wm" style="left:442.7px;top:-125.2px;color:rgba(128,128,128,0.24)">www.cfchi.com</div>
<div class="wm" style="left:442.7px;top:53.8px;color:rgba(128,128,128,0.24)">www.cfchi.com</div>
<div class="wm" style="left:442.7px;top:232.8px;color:rgba(128,128,128,0.24)">www.cfchi.com</div>
<div class="wm" style="left:442.7px;top:411.8px;color:rgba(128,128,128,0.24)">www.cfchi.com</div>
<div class="wm" style="left:442.7px;top:590.8px;color:rgba(128,128,128,0.24)">www.cfchi.com</div>
<div class="wm" style="left:442.7px;top:769.8px;color:rgba(128,128,128,0.24)">www.cfchi.com</div>
<div class="wm" style="left:442.7px;top:948.8px;color:rgba(128,128,128,0.24)">www.cfchi.com</div>
<div class="wm" style="left:442.7px;top:1127.8px;color:rgba(128,128,128,0.24)">www.cfchi.com</div>
<div class="wm" style="left:685.7px;top:-125.2px;color:rgba(128,128,128,0.24)">www.cfchi.com</div>
<div class="wm" style="left:685.7px;top:53.8px;color:rgba(128,128,128,0.24)">www.cfchi.com</div>
<div class="wm" style="left:685.7px;top:232.8px;color:rgba(128,128,128,0.24)">www.cfchi.com</div>
<div class="wm" style="left:685.7px;top:411.8px;color:rgba(128,128,128,0.24)">www.cfchi.com</div>
<div class="wm" style="left:685.7px;top:590.8px;color:rgba(128,128,128,0.24)">www.cfchi.com</div>
<div class="wm" style="left:685.7px;top:769.8px;color:rgba(128,128,128,0.24)">www.cfchi.com</div>
<div class="wm" style="left:685.7px;top:948.8px;color:rgba(128,128,128,0.24)">www.cfchi.com</div>
<div class="wm" style="left:685.7px;top:1127.8px;color:rgba(128,128,128,0.24)">www.cfchi.com</div>
<div class="wm" style="left:928.7px;top:-125.2px;color:rgba(128,128,128,0.24)">www.cfchi.com</div>
<div class="wm" style="left:928.7px;top:53.8px;color:rgba(128,128,128,0.24)">www.cfchi.com</div>
<div class="wm" style="left:928.7px;top:232.8px;color:rgba(128,128,128,0.24)">www.cfchi.com</div>
<div class="wm" style="left:928.7px;top:411.8px;color:rgba(128,128,128,0.24)">www.cfchi.com</div>
<div class="wm" style="left:928.7px;top:590.8px;color:rgba(128,128,128,0.24)">www.cfchi.com</div>
<div class="wm" style="left:928.7px;top:769.8px;color:rgba(128,128,128,0.24)">www.cfchi.com</div>
<div class="wm" style="left:928.7px;top:948.8px;color:rgba(128,128,128,0.24)">www.cfchi.com</div>
<div class="wm" style="left:928.7px;top:1127.8px;color:rgba(128,128,128,0.24)">www.cfchi.com</div>
<div class="wm" style="left:1171.7px;top:-125.2px;color:rgba(128,128,128,0.24)">www.cfchi.com</div>
<div class="wm" style="left:1171.7px;top:53.8px;color:rgba(128,128,128,0.24)">www.cfchi.com</div>
<div class="wm" style="left:1171.7px;top:232.8px;color:rgba(128,128,128,0.24)">www.cfchi.com</div>
<div class="wm" style="left:1171.7px;top:411.8px;color:rgba(128,128,128,0.24)">www.cfchi.com</div>
<div class="wm" style="left:1171.7px;top:590.8px;color:rgba(128,128,128,0.24)">www.cfchi.com</div>
<div class="wm" style="left:1171.7px;top:769.8px;color:rgba(128,128,128,0.24)">www.cfchi.com</div>
<div class="wm" style="left:1171.7px;top:948.8px;color:rgba(128,128,128,0.24)">www.cfchi.com</div>
<div class="wm" style="left:1171.7px;top:1127.8px;color:rgba(128,128,128,0.24)">www.cfchi.com</div>
<div class="wm" style="left:1414.7px;top:-125.2px;color:rgba(128,128,128,0.24)">www.cfchi.com</div>
<div class="wm" style="left:1414.7px;top:53.8px;color:rgba(128,128,128,0.24)">www.cfchi.com</div>
<div class="wm" style="left:1414.7px;top:232.8px;color:rgba(128,128,128,0.24)">www.cfchi.com</div>
<div class="wm" style="left:1414.7px;top:411.8px;color:rgba(128,128,128,0.24)">www.cfchi.com</div>
<div class="wm" style="left:1414.7px;top:590.8px;color:rgba(128,128,128,0.24)">www.cfchi.com</div>
<div class="wm" style="left:1414.7px;top:769.8px;color:rgba(128,128,128,0.24)">www.cfchi.com</div>
<div class="wm" style="left:1414.7px;top:948.8px;color:rgba(128,128,128,0.24)">www.cfchi.com</div>
<div class="wm" style="left:1414.7px;top:1127.8px;color:rgba(128,128,128,0.24)">www.cfchi.com</div>
<div class="wm" style="left:1657.7px;top:-125.2px;color:rgba(128,128,128,0.24)">www.cfchi.com</div>
<div class="wm" style="left:1657.7px;top:53.8px;color:rgba(128,128,128,0.24)">www.cfchi.com</div>
<div class="wm" style="left:1657.7px;top:232.8px;color:rgba(128,128,128,0.24)">www.cfchi.com</div>
<div class="wm" style="left:1657.7px;top:411.8px;color:rgba(128,128,128,0.24)">www.cfchi.com</div>
<div class="wm" style="left:1657.7px;top:590.8px;color:rgba(128,128,128,0.24)">www.cfchi.com</div>
<div class="wm" style="left:1657.7px;top:769.8px;color:rgba(128,128,128,0.24)">www.cfchi.com</div>
<div class="wm" style="left:1657.7px;top:948.8px;color:rgba(128,128,128,0.24)">www.cfchi.com</div>
<div class="wm" style="left:1657.7px;top:1127.8px;color:rgba(128,128,128,0.24)">www.cfchi.com</div>
<div class="wm" style="left:1900.7px;top:-125.2px;color:rgba(128,128,128,0.24)">www.cfchi.com</div>
<div class="wm" style="left:1900.7px;top:53.8px;color:rgba(128,128,128,0.24)">www.cfchi.com</div>
<div class="wm" style="left:1900.7px;top:232.8px;color:rgba(128,128,128,0.24)">www.cfchi.com</div>
<div class="wm" style="left:1900.7px;top:411.8px;color:rgba(128,128,128,0.24)">www.cfchi.com</div>
<div class="wm" style="left:1900.7px;top:590.8px;color:rgba(128,128,128,0.24)">www.cfchi.com</div>
<div class="wm" style="left:1900.7px;top:769.8px;color:rgba(128,128,128,0.24)">www.cfchi.com</div>
<div class="wm" style="left:1900.7px;top:948.8px;color:rgba(128,128,128,0.24)">www.cfchi.com</div>
<div class="wm" style="left:1900.7px;top:1127.8px;color:rgba(128,128,128,0.24)">www.cfchi.com</div>
</div>
<div class="a" style="left:687px;top:303px;width:546px;height:434px;background:#f0f0f0;overflow:hidden" id="dlg">
<div class="a" style="left:0;top:0;width:546px;height:22px;background:#c94349"></div>
<div class="a dt" style="left:5px;top:3px;font-size:12px;line-height:16px;color:#fff">条件选股</div>
<svg class="a" style="left:508px;top:4px" width="34" height="14" fill="none" stroke="#fff" stroke-width="1"><path d="M2.5 5.5H12.5"/><path d="M23.5 1.5L32.5 10.5M32.5 1.5L23.5 10.5"/></svg>
<div class="a dt" style="left:6.0px;top:33.0px;font-size:12px;line-height:16px;color:#000">条件选股公式</div>
<div class="a" style="left:85px;top:30px;width:284px;height:25px;background:#fff;border:1px solid #a6a6a6"></div>
<div class="a" style="left:350px;top:31px;width:1px;height:23px;background:#b4b4b4"></div>
<svg class="a" style="left:356px;top:40px" width="8" height="5"><path d="M0 0H7.5L3.75 4.5Z" fill="#7a7a7a"/></svg>
<div class="a dt" style="left:90.0px;top:34.5px;font-size:12px;line-height:16px;color:#000">MACD底背离 &nbsp; -</div>
<div class="btn" style="left:373px;top:30px;width:42px;height:23px;line-height:21px">查找</div>
<div class="btn" style="left:420px;top:30px;width:57px;height:23px;line-height:21px">用法注释</div>
<div class="btn" style="left:481px;top:30px;width:57px;height:23px;line-height:21px">查看公式</div>
<div class="a" style="left:4px;top:67px;width:210px;height:201px;border:1px solid #a8a8a8;border-radius:4px"></div>
<div class="a" style="left:10px;top:66px;width:57px;height:4px;background:#f0f0f0"></div>
<div class="a dt" style="left:14.0px;top:60.5px;font-size:12px;line-height:16px;color:#000">计算参数</div>
<div class="a dt" style="left:10.5px;top:94.0px;font-size:12px;line-height:16px;color:#000">无参数需要设置</div>
<div class="a dt" style="left:13.0px;top:241.5px;font-size:12px;line-height:16px;color:#000">选股周期:</div>
<div class="a" style="left:73px;top:238px;width:128px;height:25px;background:#fff;border:1px solid #a6a6a6"></div>
<div class="a" style="left:182px;top:239px;width:1px;height:23px;background:#b4b4b4"></div>
<svg class="a" style="left:188px;top:248px" width="8" height="5"><path d="M0 0H7.5L3.75 4.5Z" fill="#7a7a7a"/></svg>
<div class="a dt" style="left:78.0px;top:242.5px;font-size:12px;line-height:16px;color:#000">日线</div>
<div class="a" style="left:4px;top:280px;width:210px;height:144px;border:1px solid #a8a8a8;border-radius:4px"></div>
<div class="a" style="left:10px;top:279px;width:57px;height:4px;background:#f0f0f0"></div>
<div class="a dt" style="left:14.0px;top:273.5px;font-size:12px;line-height:16px;color:#000">选股范围</div>
<div class="a dt" style="left:10.0px;top:294.5px;font-size:12px;line-height:16px;color:#000">上证<span style="padding:0 1.5px">A</span>股 &nbsp;深证<span style="padding:0 1.5px">A</span>股</div>
<div class="btn" style="left:139px;top:289px;width:63px;height:23px;line-height:21px">改变范围</div>
<div class="btn" style="left:223px;top:73px;width:66px;height:23px;line-height:21px">加入条件</div>
<div class="btn" style="left:223px;top:111px;width:66px;height:23px;line-height:21px">删除条件</div>
<div class="btn" style="left:223px;top:184px;width:66px;height:23px;line-height:21px">引入方案</div>
<div class="btn" style="left:223px;top:222px;width:66px;height:23px;line-height:21px">保存方案</div>
<div class="a dt" style="left:303.0px;top:57.5px;font-size:12px;line-height:16px;color:#000">选股条件列表</div>
<div class="a" style="left:301px;top:75px;width:236px;height:174px;background:#fff;border:1px solid #828282"></div>
<div class="a" style="left:303px;top:77px;width:232px;height:19px;background:#0078d7"></div>
<div class="a dt" style="left:305.5px;top:78.0px;font-size:13px;line-height:18px;color:#fff">MACD底背离 &nbsp;日线</div>
<svg class="a" style="left:302px;top:256px" width="12" height="12" fill="none"><circle cx="6" cy="6" r="5.5" fill="#f0f0f0"/><path d="M2.1 9.9A5.5 5.5 0 0 1 9.9 2.1" stroke="#a0a0a0" stroke-width="1"/><path d="M2.8 9.2A4.5 4.5 0 0 1 9.2 2.8" stroke="#505050" stroke-width="1"/><path d="M9.9 2.1A5.5 5.5 0 0 1 2.1 9.9" stroke="#ffffff" stroke-width="1"/><path d="M9.2 2.8A4.5 4.5 0 0 1 2.8 9.2" stroke="#e4e4e4" stroke-width="1"/></svg>
<div class="a dt" style="left:320.0px;top:254.0px;font-size:12px;line-height:16px;color:#a0a0a0">全部条件相与</div>
<svg class="a" style="left:445px;top:256px" width="12" height="12" fill="none"><circle cx="6" cy="6" r="5.5" fill="#f0f0f0"/><path d="M2.1 9.9A5.5 5.5 0 0 1 9.9 2.1" stroke="#a0a0a0" stroke-width="1"/><path d="M2.8 9.2A4.5 4.5 0 0 1 9.2 2.8" stroke="#505050" stroke-width="1"/><path d="M9.9 2.1A5.5 5.5 0 0 1 2.1 9.9" stroke="#ffffff" stroke-width="1"/><path d="M9.2 2.8A4.5 4.5 0 0 1 2.8 9.2" stroke="#e4e4e4" stroke-width="1"/></svg>
<div class="a dt" style="left:463.0px;top:254.0px;font-size:12px;line-height:16px;color:#a0a0a0">全部条件相或</div>
<div class="a" style="left:306px;top:260px;width:4px;height:4px;border-radius:50%;background:#8a8a8a"></div>
<div class="a dt" style="left:475.0px;top:275.0px;font-size:12px;line-height:16px;color:#ff0000">选股完毕.</div>
<div class="chk" style="left:223px;top:298px"></div>
<div class="a dt" style="left:241.0px;top:296.5px;font-size:12px;line-height:16px;color:#000">使用涨跌不定周期</div>
<div class="a" style="left:343px;top:298px;width:193px;height:13px;border:1px solid;border-color:#a0a0a0 #fff #fff #a0a0a0"></div>
<div class="a dt" style="left:342.5px;top:320.5px;font-size:12px;line-height:16px;color:#000">品种数</div>
<div class="a" style="left:381px;top:321px;width:42px;height:14px;border:1px solid;border-color:#a0a0a0 #fff #fff #a0a0a0"></div>
<div class="a dt" style="left:382.0px;top:321.5px;font-size:12px;line-height:16px;color:#000">4831</div>
<div class="a dt" style="left:427.0px;top:320.5px;font-size:12px;line-height:16px;color:#000">选中数</div>
<div class="a" style="left:466px;top:321px;width:70px;height:14px;border:1px solid;border-color:#a0a0a0 #fff #fff #a0a0a0"></div>
<div class="a dt" style="left:467.0px;top:321.5px;font-size:12px;line-height:16px;color:#000">41/0.8%</div>
<div class="chk" style="left:223px;top:349px"></div>
<svg class="a" style="left:223px;top:349px" width="13" height="13"><path d="M3 6.2L5.4 9L10 3.6" fill="none" stroke="#1a9a1a" stroke-width="2"/></svg>
<div class="a dt" style="left:241.0px;top:347.5px;font-size:12px;line-height:16px;color:#000">前复权数据</div>
<div class="chk" style="left:310px;top:349px"></div>
<div class="a dt" style="left:328.0px;top:347.5px;font-size:12px;line-height:16px;color:#000">剔除当前未交易的品种</div>
<div class="chk" style="left:457px;top:349px"></div>
<div class="a dt" style="left:475.0px;top:347.5px;font-size:12px;line-height:16px;color:#000">剔除ST品种</div>
<div class="chk" style="left:223px;top:378px"></div>
<div class="a dt" style="left:241.0px;top:376.5px;font-size:12px;line-height:16px;color:#000">时间段内满足条件</div>
<div class="btn" style="left:385px;top:372px;width:72px;height:23px;line-height:21px">选股入板块</div>
<div class="btn" style="left:471px;top:372px;width:66px;height:23px;line-height:21px">执行选股</div>
<div class="btn" style="left:471px;top:399px;width:66px;height:23px;line-height:21px">关闭</div>
<div class="wm" style="left:-244.3px;top:-201.2px;color:rgba(100,100,100,0.3)">www.cfchi.com</div>
<div class="wm" style="left:-244.3px;top:-22.2px;color:rgba(100,100,100,0.3)">www.cfchi.com</div>
<div class="wm" style="left:-244.3px;top:156.8px;color:rgba(100,100,100,0.3)">www.cfchi.com</div>
<div class="wm" style="left:-244.3px;top:335.8px;color:rgba(100,100,100,0.3)">www.cfchi.com</div>
<div class="wm" style="left:-244.3px;top:514.8px;color:rgba(100,100,100,0.3)">www.cfchi.com</div>
<div class="wm" style="left:-1.3px;top:-201.2px;color:rgba(100,100,100,0.3)">www.cfchi.com</div>
<div class="wm" style="left:-1.3px;top:-22.2px;color:rgba(100,100,100,0.3)">www.cfchi.com</div>
<div class="wm" style="left:-1.3px;top:156.8px;color:rgba(100,100,100,0.3)">www.cfchi.com</div>
<div class="wm" style="left:-1.3px;top:335.8px;color:rgba(100,100,100,0.3)">www.cfchi.com</div>
<div class="wm" style="left:-1.3px;top:514.8px;color:rgba(100,100,100,0.3)">www.cfchi.com</div>
<div class="wm" style="left:241.7px;top:-201.2px;color:rgba(100,100,100,0.3)">www.cfchi.com</div>
<div class="wm" style="left:241.7px;top:-22.2px;color:rgba(100,100,100,0.3)">www.cfchi.com</div>
<div class="wm" style="left:241.7px;top:156.8px;color:rgba(100,100,100,0.3)">www.cfchi.com</div>
<div class="wm" style="left:241.7px;top:335.8px;color:rgba(100,100,100,0.3)">www.cfchi.com</div>
<div class="wm" style="left:241.7px;top:514.8px;color:rgba(100,100,100,0.3)">www.cfchi.com</div>
<div class="wm" style="left:484.7px;top:-201.2px;color:rgba(100,100,100,0.3)">www.cfchi.com</div>
<div class="wm" style="left:484.7px;top:-22.2px;color:rgba(100,100,100,0.3)">www.cfchi.com</div>
<div class="wm" style="left:484.7px;top:156.8px;color:rgba(100,100,100,0.3)">www.cfchi.com</div>
<div class="wm" style="left:484.7px;top:335.8px;color:rgba(100,100,100,0.3)">www.cfchi.com</div>
<div class="wm" style="left:484.7px;top:514.8px;color:rgba(100,100,100,0.3)">www.cfchi.com</div>
</div></body></html>
